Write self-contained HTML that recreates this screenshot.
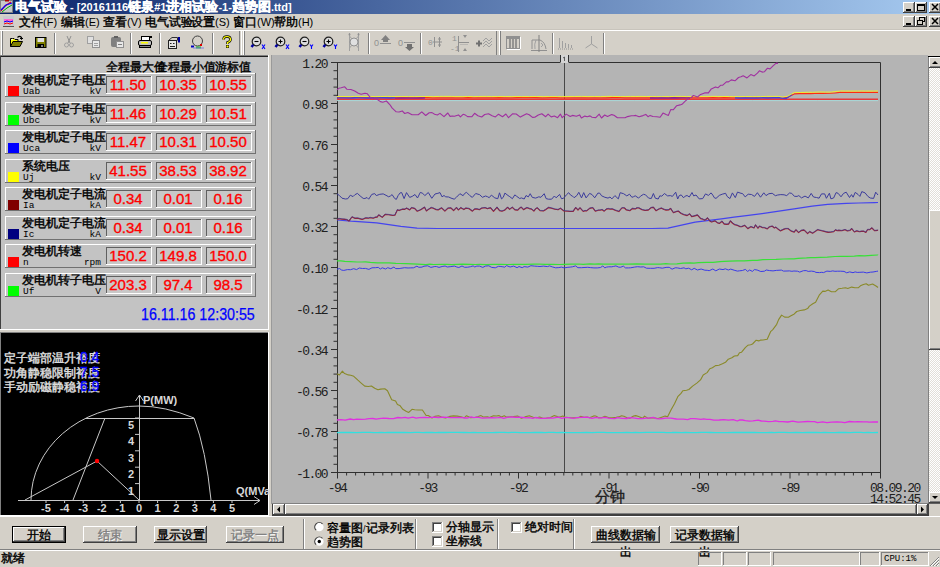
<!DOCTYPE html><html><head><meta charset="utf-8"><style>html,body{margin:0;padding:0;}body{width:940px;height:567px;position:relative;overflow:hidden;background:#d4d0c8;font-family:"Liberation Sans",sans-serif;font-size:12px;color:#000}div{box-sizing:border-box}svg{position:absolute;overflow:visible}.m{font-family:"Liberation Mono",monospace}</style></head><body><div style="position:absolute;left:0px;top:0px;width:940px;height:14px;background:linear-gradient(to right,#0a246a,#a6caf0)"></div><svg style="left:0;top:0" width="14" height="14"><rect x="0.5" y="0.5" width="12" height="12" fill="#c8c8c8" stroke="#808080"/><rect x="5" y="0" width="4" height="1.5" fill="#a00"/><polyline points="1,11 5,6 11,2" stroke="#f00" fill="none" stroke-width="1.2"/><polyline points="1,10 6,5 12,3" stroke="#00f" fill="none" stroke-width="1.2"/><polyline points="2,12 7,8 12,5" stroke="#0a0" fill="none" stroke-width="1"/></svg><div style="position:absolute;left:15px;top:0px;white-space:nowrap;color:#fff;font-weight:bold;line-height:14px"><span style="font-size:13px;-webkit-text-stroke:0.4px">电气试验</span><span style="font-size:11px;"> - [20161116</span><span style="font-size:13px;-webkit-text-stroke:0.4px">链泉</span><span style="font-size:11px;">#1</span><span style="font-size:13px;-webkit-text-stroke:0.4px">进相试验</span><span style="font-size:11px;">-1-</span><span style="font-size:13px;-webkit-text-stroke:0.4px">趋势图</span><span style="font-size:11px;">.ttd]</span></div><div style="position:absolute;left:903px;top:2px;width:12px;height:11px;background:#d4d0c8"></div><div style="position:absolute;left:903px;top:2px;width:12px;height:1px;background:#fff"></div><div style="position:absolute;left:903px;top:2px;width:1px;height:11px;background:#fff"></div><div style="position:absolute;left:903px;top:12px;width:12px;height:1px;background:#404040"></div><div style="position:absolute;left:914px;top:2px;width:1px;height:11px;background:#404040"></div><div style="position:absolute;left:904px;top:11px;width:10px;height:1px;background:#808080"></div><div style="position:absolute;left:913px;top:3px;width:1px;height:9px;background:#808080"></div><div style="position:absolute;left:903px;top:3px;width:12px;height:11px;line-height:11px;text-align:center;color:#000;font-size:12px;"></div><svg style="left:903px;top:2px" width="12" height="11"><rect x="3" y="7" width="5" height="2" fill="#000"/></svg><div style="position:absolute;left:915px;top:2px;width:12px;height:11px;background:#d4d0c8"></div><div style="position:absolute;left:915px;top:2px;width:12px;height:1px;background:#fff"></div><div style="position:absolute;left:915px;top:2px;width:1px;height:11px;background:#fff"></div><div style="position:absolute;left:915px;top:12px;width:12px;height:1px;background:#404040"></div><div style="position:absolute;left:926px;top:2px;width:1px;height:11px;background:#404040"></div><div style="position:absolute;left:916px;top:11px;width:10px;height:1px;background:#808080"></div><div style="position:absolute;left:925px;top:3px;width:1px;height:9px;background:#808080"></div><div style="position:absolute;left:915px;top:3px;width:12px;height:11px;line-height:11px;text-align:center;color:#000;font-size:12px;"></div><svg style="left:915px;top:2px" width="12" height="11"><rect x="2.5" y="2.5" width="7" height="6" fill="none" stroke="#000"/><rect x="2" y="2" width="8" height="2" fill="#000"/></svg><div style="position:absolute;left:929px;top:2px;width:12px;height:11px;background:#d4d0c8"></div><div style="position:absolute;left:929px;top:2px;width:12px;height:1px;background:#fff"></div><div style="position:absolute;left:929px;top:2px;width:1px;height:11px;background:#fff"></div><div style="position:absolute;left:929px;top:12px;width:12px;height:1px;background:#404040"></div><div style="position:absolute;left:940px;top:2px;width:1px;height:11px;background:#404040"></div><div style="position:absolute;left:930px;top:11px;width:10px;height:1px;background:#808080"></div><div style="position:absolute;left:939px;top:3px;width:1px;height:9px;background:#808080"></div><div style="position:absolute;left:929px;top:3px;width:12px;height:11px;line-height:11px;text-align:center;color:#000;font-size:12px;"></div><svg style="left:929px;top:2px" width="12" height="11"><path d="M3,2 L9,8 M9,2 L3,8" stroke="#000" stroke-width="1.5"/></svg><svg style="left:3px;top:16px" width="11" height="11"><rect x="0" y="0" width="11" height="11" fill="#c8c8d0"/><rect x="1" y="3" width="9" height="3" fill="#f6c"/><polyline points="1,6 4,5 7,6 10,5" stroke="#00f" fill="none"/><polyline points="1,8 4,7 7,8 10,7" stroke="#f00" fill="none"/><rect x="0" y="10" width="11" height="1" fill="#555"/></svg><div style="position:absolute;left:19px;top:15px;white-space:nowrap;line-height:14px"><span style="font-size:12px;-webkit-text-stroke:0.4px">文件</span><span style="font-size:11px;">(F)</span></div><div style="position:absolute;left:61px;top:15px;white-space:nowrap;line-height:14px"><span style="font-size:12px;-webkit-text-stroke:0.4px">编辑</span><span style="font-size:11px;">(E)</span></div><div style="position:absolute;left:103px;top:15px;white-space:nowrap;line-height:14px"><span style="font-size:12px;-webkit-text-stroke:0.4px">查看</span><span style="font-size:11px;">(V)</span></div><div style="position:absolute;left:145px;top:15px;white-space:nowrap;line-height:14px"><span style="font-size:12px;-webkit-text-stroke:0.4px">电气试验</span></div><div style="position:absolute;left:191px;top:15px;white-space:nowrap;line-height:14px"><span style="font-size:12px;-webkit-text-stroke:0.4px">设置</span><span style="font-size:11px;">(S)</span></div><div style="position:absolute;left:233px;top:15px;white-space:nowrap;line-height:14px"><span style="font-size:12px;-webkit-text-stroke:0.4px">窗口</span><span style="font-size:11px;">(W)</span></div><div style="position:absolute;left:274px;top:15px;white-space:nowrap;line-height:14px"><span style="font-size:12px;-webkit-text-stroke:0.4px">帮助</span><span style="font-size:11px;">(H)</span></div><div style="position:absolute;left:903px;top:16px;width:12px;height:11px;background:#d4d0c8"></div><div style="position:absolute;left:903px;top:16px;width:12px;height:1px;background:#fff"></div><div style="position:absolute;left:903px;top:16px;width:1px;height:11px;background:#fff"></div><div style="position:absolute;left:903px;top:26px;width:12px;height:1px;background:#404040"></div><div style="position:absolute;left:914px;top:16px;width:1px;height:11px;background:#404040"></div><div style="position:absolute;left:904px;top:25px;width:10px;height:1px;background:#808080"></div><div style="position:absolute;left:913px;top:17px;width:1px;height:9px;background:#808080"></div><div style="position:absolute;left:903px;top:17px;width:12px;height:11px;line-height:11px;text-align:center;color:#000;font-size:12px;"></div><svg style="left:903px;top:16px" width="12" height="11"><rect x="3" y="7" width="5" height="2" fill="#000"/></svg><div style="position:absolute;left:915px;top:16px;width:12px;height:11px;background:#d4d0c8"></div><div style="position:absolute;left:915px;top:16px;width:12px;height:1px;background:#fff"></div><div style="position:absolute;left:915px;top:16px;width:1px;height:11px;background:#fff"></div><div style="position:absolute;left:915px;top:26px;width:12px;height:1px;background:#404040"></div><div style="position:absolute;left:926px;top:16px;width:1px;height:11px;background:#404040"></div><div style="position:absolute;left:916px;top:25px;width:10px;height:1px;background:#808080"></div><div style="position:absolute;left:925px;top:17px;width:1px;height:9px;background:#808080"></div><div style="position:absolute;left:915px;top:17px;width:12px;height:11px;line-height:11px;text-align:center;color:#000;font-size:12px;"></div><svg style="left:915px;top:16px" width="12" height="11"><rect x="4.5" y="1.5" width="5" height="4" fill="none" stroke="#000"/><rect x="2.5" y="4.5" width="5" height="4" fill="#d4d0c8" stroke="#000"/></svg><div style="position:absolute;left:929px;top:16px;width:12px;height:11px;background:#d4d0c8"></div><div style="position:absolute;left:929px;top:16px;width:12px;height:1px;background:#fff"></div><div style="position:absolute;left:929px;top:16px;width:1px;height:11px;background:#fff"></div><div style="position:absolute;left:929px;top:26px;width:12px;height:1px;background:#404040"></div><div style="position:absolute;left:940px;top:16px;width:1px;height:11px;background:#404040"></div><div style="position:absolute;left:930px;top:25px;width:10px;height:1px;background:#808080"></div><div style="position:absolute;left:939px;top:17px;width:1px;height:9px;background:#808080"></div><div style="position:absolute;left:929px;top:17px;width:12px;height:11px;line-height:11px;text-align:center;color:#000;font-size:12px;"></div><svg style="left:929px;top:16px" width="12" height="11"><path d="M3,2 L9,8 M9,2 L3,8" stroke="#000" stroke-width="1.5"/></svg><div style="position:absolute;left:0px;top:29px;width:940px;height:1px;background:#c8c4bc"></div><div style="position:absolute;left:0px;top:30px;width:940px;height:1px;background:#fff"></div><div style="position:absolute;left:1px;top:31px;width:1px;height:24px;background:#fff"></div><div style="position:absolute;left:2px;top:31px;width:1px;height:24px;background:#808080"></div><div style="position:absolute;left:54px;top:33px;width:1px;height:21px;background:#808080"></div><div style="position:absolute;left:55px;top:33px;width:1px;height:21px;background:#fff"></div><div style="position:absolute;left:130px;top:33px;width:1px;height:21px;background:#808080"></div><div style="position:absolute;left:131px;top:33px;width:1px;height:21px;background:#fff"></div><div style="position:absolute;left:159px;top:33px;width:1px;height:21px;background:#808080"></div><div style="position:absolute;left:160px;top:33px;width:1px;height:21px;background:#fff"></div><div style="position:absolute;left:212px;top:33px;width:1px;height:21px;background:#808080"></div><div style="position:absolute;left:213px;top:33px;width:1px;height:21px;background:#fff"></div><div style="position:absolute;left:552px;top:33px;width:1px;height:21px;background:#808080"></div><div style="position:absolute;left:553px;top:33px;width:1px;height:21px;background:#fff"></div><div style="position:absolute;left:603px;top:33px;width:1px;height:21px;background:#808080"></div><div style="position:absolute;left:604px;top:33px;width:1px;height:21px;background:#fff"></div><div style="position:absolute;left:239px;top:31px;width:1px;height:24px;background:#808080"></div><div style="position:absolute;left:241px;top:31px;width:1px;height:24px;background:#fff"></div><div style="position:absolute;left:243px;top:31px;width:1px;height:24px;background:#fff"></div><div style="position:absolute;left:244px;top:31px;width:1px;height:24px;background:#808080"></div><div style="position:absolute;left:368px;top:33px;width:1px;height:21px;background:#808080"></div><div style="position:absolute;left:369px;top:33px;width:1px;height:21px;background:#fff"></div><div style="position:absolute;left:420px;top:33px;width:1px;height:21px;background:#808080"></div><div style="position:absolute;left:421px;top:33px;width:1px;height:21px;background:#fff"></div><div style="position:absolute;left:496px;top:31px;width:1px;height:24px;background:#808080"></div><div style="position:absolute;left:499px;top:31px;width:1px;height:24px;background:#fff"></div><div style="position:absolute;left:500px;top:31px;width:1px;height:24px;background:#808080"></div><svg style="left:10px;top:35px" width="14" height="13"><path d="M0.5,11.5 V3.5 H4 L5,4.5 H8 V6" fill="#ffff00" stroke="#000"/><path d="M1,5 L3,4" stroke="#fff"/><path d="M0.5,11.5 L3,6.5 H12.5 L10,11.5 Z" fill="#808000" stroke="#000"/><path d="M7.5,2.5 Q9.5,0.2 11.5,2.5 L11.5,4" fill="none" stroke="#000" stroke-width="1.2"/><path d="M10,3 L11.5,4.5 L13,3" fill="none" stroke="#000"/></svg><svg style="left:35px;top:37px" width="12" height="11"><rect x="0.5" y="0.5" width="10.5" height="10" fill="#808000" stroke="#000"/><rect x="2.5" y="1" width="6.5" height="4" fill="#e0e0e0"/><rect x="2.5" y="7" width="6.5" height="3.5" fill="#000"/><rect x="6.5" y="8" width="1" height="2" fill="#fff"/></svg><svg style="left:64px;top:36px" width="10" height="12"><path d="M3,0 L6,7 M7,0 L4,7" stroke="#909090"/><circle cx="2.5" cy="9" r="2" fill="none" stroke="#a0a0a0"/><circle cx="7.5" cy="9" r="2" fill="none" stroke="#a0a0a0"/></svg><svg style="left:87px;top:36px" width="13" height="12"><rect x="0.5" y="0.5" width="6" height="7" fill="#e0e0e0" stroke="#a0a0a0"/><rect x="5.5" y="4.5" width="7" height="7" fill="#e8e8e8" stroke="#909090"/><path d="M7,7.5 h4 M7,9.5 h4" stroke="#a0a0a0"/></svg><svg style="left:111px;top:36px" width="13" height="12"><rect x="0.5" y="1.5" width="9" height="9" rx="1" fill="#808080" stroke="#808080"/><rect x="3" y="0" width="4" height="2" fill="#606060"/><rect x="5.5" y="5.5" width="7" height="6" fill="#e8e8e8" stroke="#909090"/><path d="M7,8.5 h4" stroke="#808080"/></svg><svg style="left:138px;top:35px" width="15" height="14"><rect x="3.5" y="1.5" width="8" height="4" fill="#fff" stroke="#000"/><rect x="0.5" y="5.5" width="13" height="5" rx="1.5" fill="#c0c0c0" stroke="#000"/><rect x="3" y="7" width="7" height="1.5" fill="#ff0"/><rect x="1.5" y="10.5" width="11" height="2" fill="#808080" stroke="#000"/><rect x="12" y="1" width="2" height="2" fill="#000"/></svg><svg style="left:167px;top:36px" width="15" height="14"><rect x="1.5" y="4.5" width="8" height="8" fill="#e4e4e4" stroke="#202020"/><path d="M1.5,4.5 L5,1.5 H10.5 V4.5" fill="none" stroke="#303030"/><path d="M3,7.5 h1.5 M6,7.5 h1.5 M3,10.5 h5" stroke="#202020"/><rect x="11" y="1" width="2" height="5.5" fill="#0000a0"/></svg><svg style="left:191px;top:35px" width="14" height="14"><circle cx="6.5" cy="6" r="5" fill="none" stroke="#404040"/><rect x="0" y="10.5" width="3" height="2" fill="#0000c0"/><rect x="5" y="11.5" width="5" height="2" fill="#20c020"/><rect x="9" y="9" width="2" height="2" fill="#e00000"/><rect x="2" y="12.5" width="11" height="1" fill="#8080e0"/></svg><svg style="left:222px;top:36px" width="10" height="12"><path d="M1.5,3.5 Q1.5,0.5 5,0.5 Q8.5,0.5 8.5,3.5 Q8.5,5.5 5.5,6.5 V8" fill="none" stroke="#000" stroke-width="2.5"/><path d="M1.5,3.5 Q1.5,0.5 5,0.5 Q8.5,0.5 8.5,3.5 Q8.5,5.5 5.5,6.5 V8" fill="none" stroke="#ffff00" stroke-width="1.2"/><rect x="4" y="9" width="3" height="3" fill="#000"/><rect x="4.5" y="9.5" width="2" height="2" fill="#ff0"/></svg><svg style="left:251px;top:36px" width="16" height="14"><circle cx="5.5" cy="5.5" r="4.3" fill="#dcdcdc" stroke="#202020" stroke-width="1.2"/><path d="M3.5,5.5 H7.5" stroke="#000" stroke-width="1.1"/><path d="M2.3,8.7 L0.5,11" stroke="#0000a0" stroke-width="2.5"/><path d="M11,8.5 L14,13 M14,8.5 L11,13" stroke="#0000ff" stroke-width="1.1"/></svg><svg style="left:275px;top:36px" width="16" height="14"><circle cx="5.5" cy="5.5" r="4.3" fill="#dcdcdc" stroke="#202020" stroke-width="1.2"/><path d="M3.5,5.5 H7.5 M5.5,3.5 V7.5" stroke="#000" stroke-width="1.1"/><path d="M2.3,8.7 L0.5,11" stroke="#0000a0" stroke-width="2.5"/><path d="M11,8.5 L14,13 M14,8.5 L11,13" stroke="#0000ff" stroke-width="1.1"/></svg><svg style="left:299px;top:36px" width="16" height="14"><circle cx="5.5" cy="5.5" r="4.3" fill="#dcdcdc" stroke="#202020" stroke-width="1.2"/><path d="M3.5,5.5 H7.5" stroke="#000" stroke-width="1.1"/><path d="M2.3,8.7 L0.5,11" stroke="#0000a0" stroke-width="2.5"/><path d="M11,8.5 L12.5,10.5 L14,8.5 M12.5,10.5 V13" stroke="#0000ff" stroke-width="1.1" fill="none"/></svg><svg style="left:323px;top:36px" width="16" height="14"><circle cx="5.5" cy="5.5" r="4.3" fill="#dcdcdc" stroke="#202020" stroke-width="1.2"/><path d="M3.5,5.5 H7.5 M5.5,3.5 V7.5" stroke="#000" stroke-width="1.1"/><path d="M2.3,8.7 L0.5,11" stroke="#0000a0" stroke-width="2.5"/><path d="M11,8.5 L12.5,10.5 L14,8.5 M12.5,10.5 V13" stroke="#0000ff" stroke-width="1.1" fill="none"/></svg><svg style="left:348px;top:33px" width="12" height="19"><path d="M1.5,0 V18 M10.5,0 V18" stroke="#a0a0a0"/><circle cx="6" cy="9" r="4" fill="#e0e0e0" stroke="#909090"/><path d="M1.5,3 L4,6 M10.5,3 L8,6 M1.5,15 L4,12 M10.5,15 L8,12" stroke="#a0a0a0"/><circle cx="1.5" cy="1.5" r="1" fill="#909090"/><circle cx="10.5" cy="1.5" r="1" fill="#909090"/></svg><svg style="left:374px;top:34px" width="18" height="14"><text x="0" y="12" font-family="Liberation Sans" font-size="9" fill="#909090">0</text><path d="M7,6 L11.5,1 L16,6 Z" fill="#808080"/><rect x="9" y="6" width="5" height="2" fill="#808080"/><path d="M6,9.5 H17" stroke="#909090"/></svg><svg style="left:398px;top:37px" width="18" height="15"><text x="0" y="9" font-family="Liberation Sans" font-size="9" fill="#909090">0</text><path d="M6,5.5 H17" stroke="#909090"/><rect x="9" y="7" width="5" height="3" fill="#707070"/><path d="M7,10 L11.5,14 L16,10 Z" fill="#707070"/></svg><svg style="left:428px;top:36px" width="15" height="12"><text x="0" y="9" font-family="Liberation Mono" font-size="8" fill="#909090">0</text><path d="M6.5,1 V11 M11.5,1 V11 M5,6 H14 M10,3 H13 M10,9 H13" stroke="#909090"/></svg><svg style="left:450px;top:34px" width="20" height="18"><text x="2" y="7" font-family="Liberation Mono" font-size="8" fill="#909090">1</text><text x="0" y="17" font-family="Liberation Mono" font-size="8" fill="#909090">-1</text><path d="M8.5,2 V18 M8,8.5 H19" stroke="#909090"/><path d="M11,11 v-1 M13,11 v-1 M15,11 v-1 M17,11 v-1" stroke="#a0a0a0"/><path d="M13,1 L15,4 L17,1 Z M13,17 L15,14 L17,17 Z" fill="#909090"/></svg><svg style="left:475px;top:37px" width="18" height="12"><path d="M1,6.5 H7 M4,3.5 V9.5" stroke="#707070" stroke-width="2"/><path d="M8,4 L11,1 L14,4 L17,1 M8,7 L11,4 L14,7 L17,4 M8,10 L11,7 L14,10 L17,7" stroke="#a0a0a0" fill="none"/></svg><svg style="left:506px;top:36px" width="15" height="14"><rect x="0.5" y="0.5" width="13" height="12" fill="#d4d0c8" stroke="#909090"/><rect x="1" y="1" width="12" height="2" fill="#909090"/><path d="M4,3 V12 M7,3 V12 M10,3 V12" stroke="#808080" stroke-width="1.5"/><path d="M1,13.5 H14 M14.5,1 V13" stroke="#fff"/></svg><svg style="left:530px;top:35px" width="18" height="17"><path d="M1,15.5 H17" stroke="#909090"/><path d="M2,14 V5 H10 Q15,7 16,14" fill="none" stroke="#909090"/><path d="M9,0 V17" stroke="#808080"/><path d="M6,5 Q4,9 5,14 M11,8 L13,10 L11,12" stroke="#a0a0a0" fill="none"/></svg><svg style="left:558px;top:37px" width="17" height="13"><path d="M1.5,1 V11 M4.5,4 V11 M7.5,6 V11 M10.5,7 V11 M13.5,8 V11" stroke="#a0a0a0"/><path d="M0,12 H16" stroke="#909090" stroke-dasharray="1,1"/></svg><svg style="left:585px;top:36px" width="13" height="13"><path d="M6.5,0 V8 L0.5,12 M6.5,8 L12.5,12" stroke="#a0a0a0" fill="none"/></svg><div style="position:absolute;left:271px;top:55px;width:657px;height:449px;background:#b4b4b4"></div><div style="position:absolute;left:271px;top:55px;width:1px;height:449px;background:#9a9a9a"></div><div style="position:absolute;left:0px;top:55px;width:269px;height:275px;background:#c3c3c3"></div><div style="position:absolute;left:0px;top:55px;width:268px;height:1px;background:#808080"></div><div style="position:absolute;left:0px;top:56px;width:268px;height:1px;background:#202020"></div><div style="position:absolute;left:0px;top:56px;width:1px;height:273px;background:#404040"></div><div style="position:absolute;left:268px;top:55px;width:1px;height:275px;background:#fff"></div><div style="position:absolute;left:0px;top:329px;width:269px;height:1px;background:#fff"></div><div style="position:absolute;left:106px;top:60px;white-space:nowrap;line-height:14px"><span style="font-size:12px;-webkit-text-stroke:0.4px">全程最大值</span></div><div style="position:absolute;left:156px;top:60px;white-space:nowrap;line-height:14px"><span style="font-size:12px;-webkit-text-stroke:0.4px">全程最小值</span></div><div style="position:absolute;left:215px;top:60px;white-space:nowrap;line-height:14px"><span style="font-size:12px;-webkit-text-stroke:0.4px">游标值</span></div><div style="position:absolute;left:5px;top:73px;width:251px;height:24px;background:#c3c3c3"></div><div style="position:absolute;left:5px;top:73px;width:250px;height:1px;background:#fff"></div><div style="position:absolute;left:5px;top:73px;width:1px;height:23px;background:#fff"></div><div style="position:absolute;left:5px;top:96px;width:251px;height:1px;background:#707070"></div><div style="position:absolute;left:255px;top:73px;width:1px;height:24px;background:#707070"></div><div style="position:absolute;left:8px;top:86px;width:11px;height:10px;background:#ff0000"></div><div style="position:absolute;left:22px;top:73px;white-space:nowrap;line-height:14px"><span style="font-size:12px;-webkit-text-stroke:0.4px">发电机定子电压</span><span style="font-size:9px;">Uab</span></div><div style="position:absolute;left:23px;top:86px;white-space:nowrap;line-height:12px;font-size:9.5px;font-family:'Liberation Mono'">Uab</div><div style="position:absolute;left:60px;top:86px;width:41px;text-align:right;line-height:12px;font-size:9.5px;font-family:'Liberation Mono'">kV</div><div style="position:absolute;left:106px;top:76px;width:46px;height:18px;background:#c8c8c8"></div><div style="position:absolute;left:106px;top:76px;width:46px;height:1px;background:#606060"></div><div style="position:absolute;left:106px;top:76px;width:1px;height:18px;background:#606060"></div><div style="position:absolute;left:106px;top:93px;width:46px;height:1px;background:#ffffff"></div><div style="position:absolute;left:151px;top:76px;width:1px;height:18px;background:#ffffff"></div><div style="position:absolute;left:105px;top:76px;width:46px;height:18px;line-height:17px;text-align:center;color:#ff0000;font-size:15px;-webkit-text-stroke:0.35px #ff0000">11.50</div><div style="position:absolute;left:156px;top:76px;width:46px;height:18px;background:#c8c8c8"></div><div style="position:absolute;left:156px;top:76px;width:46px;height:1px;background:#606060"></div><div style="position:absolute;left:156px;top:76px;width:1px;height:18px;background:#606060"></div><div style="position:absolute;left:156px;top:93px;width:46px;height:1px;background:#ffffff"></div><div style="position:absolute;left:201px;top:76px;width:1px;height:18px;background:#ffffff"></div><div style="position:absolute;left:155px;top:76px;width:46px;height:18px;line-height:17px;text-align:center;color:#ff0000;font-size:15px;-webkit-text-stroke:0.35px #ff0000">10.35</div><div style="position:absolute;left:206px;top:76px;width:46px;height:18px;background:#c8c8c8"></div><div style="position:absolute;left:206px;top:76px;width:46px;height:1px;background:#606060"></div><div style="position:absolute;left:206px;top:76px;width:1px;height:18px;background:#606060"></div><div style="position:absolute;left:206px;top:93px;width:46px;height:1px;background:#ffffff"></div><div style="position:absolute;left:251px;top:76px;width:1px;height:18px;background:#ffffff"></div><div style="position:absolute;left:205px;top:76px;width:46px;height:18px;line-height:17px;text-align:center;color:#ff0000;font-size:15px;-webkit-text-stroke:0.35px #ff0000">10.55</div><div style="position:absolute;left:5px;top:102px;width:251px;height:24px;background:#c3c3c3"></div><div style="position:absolute;left:5px;top:102px;width:250px;height:1px;background:#fff"></div><div style="position:absolute;left:5px;top:102px;width:1px;height:23px;background:#fff"></div><div style="position:absolute;left:5px;top:125px;width:251px;height:1px;background:#707070"></div><div style="position:absolute;left:255px;top:102px;width:1px;height:24px;background:#707070"></div><div style="position:absolute;left:8px;top:115px;width:11px;height:10px;background:#00ff00"></div><div style="position:absolute;left:22px;top:102px;white-space:nowrap;line-height:14px"><span style="font-size:12px;-webkit-text-stroke:0.4px">发电机定子电压</span><span style="font-size:9px;">Ubc</span></div><div style="position:absolute;left:23px;top:115px;white-space:nowrap;line-height:12px;font-size:9.5px;font-family:'Liberation Mono'">Ubc</div><div style="position:absolute;left:60px;top:115px;width:41px;text-align:right;line-height:12px;font-size:9.5px;font-family:'Liberation Mono'">kV</div><div style="position:absolute;left:106px;top:105px;width:46px;height:18px;background:#c8c8c8"></div><div style="position:absolute;left:106px;top:105px;width:46px;height:1px;background:#606060"></div><div style="position:absolute;left:106px;top:105px;width:1px;height:18px;background:#606060"></div><div style="position:absolute;left:106px;top:122px;width:46px;height:1px;background:#ffffff"></div><div style="position:absolute;left:151px;top:105px;width:1px;height:18px;background:#ffffff"></div><div style="position:absolute;left:105px;top:105px;width:46px;height:18px;line-height:17px;text-align:center;color:#ff0000;font-size:15px;-webkit-text-stroke:0.35px #ff0000">11.46</div><div style="position:absolute;left:156px;top:105px;width:46px;height:18px;background:#c8c8c8"></div><div style="position:absolute;left:156px;top:105px;width:46px;height:1px;background:#606060"></div><div style="position:absolute;left:156px;top:105px;width:1px;height:18px;background:#606060"></div><div style="position:absolute;left:156px;top:122px;width:46px;height:1px;background:#ffffff"></div><div style="position:absolute;left:201px;top:105px;width:1px;height:18px;background:#ffffff"></div><div style="position:absolute;left:155px;top:105px;width:46px;height:18px;line-height:17px;text-align:center;color:#ff0000;font-size:15px;-webkit-text-stroke:0.35px #ff0000">10.29</div><div style="position:absolute;left:206px;top:105px;width:46px;height:18px;background:#c8c8c8"></div><div style="position:absolute;left:206px;top:105px;width:46px;height:1px;background:#606060"></div><div style="position:absolute;left:206px;top:105px;width:1px;height:18px;background:#606060"></div><div style="position:absolute;left:206px;top:122px;width:46px;height:1px;background:#ffffff"></div><div style="position:absolute;left:251px;top:105px;width:1px;height:18px;background:#ffffff"></div><div style="position:absolute;left:205px;top:105px;width:46px;height:18px;line-height:17px;text-align:center;color:#ff0000;font-size:15px;-webkit-text-stroke:0.35px #ff0000">10.51</div><div style="position:absolute;left:5px;top:130px;width:251px;height:24px;background:#c3c3c3"></div><div style="position:absolute;left:5px;top:130px;width:250px;height:1px;background:#fff"></div><div style="position:absolute;left:5px;top:130px;width:1px;height:23px;background:#fff"></div><div style="position:absolute;left:5px;top:153px;width:251px;height:1px;background:#707070"></div><div style="position:absolute;left:255px;top:130px;width:1px;height:24px;background:#707070"></div><div style="position:absolute;left:8px;top:143px;width:11px;height:10px;background:#0000ff"></div><div style="position:absolute;left:22px;top:130px;white-space:nowrap;line-height:14px"><span style="font-size:12px;-webkit-text-stroke:0.4px">发电机定子电压</span><span style="font-size:9px;">Uca</span></div><div style="position:absolute;left:23px;top:143px;white-space:nowrap;line-height:12px;font-size:9.5px;font-family:'Liberation Mono'">Uca</div><div style="position:absolute;left:60px;top:143px;width:41px;text-align:right;line-height:12px;font-size:9.5px;font-family:'Liberation Mono'">kV</div><div style="position:absolute;left:106px;top:133px;width:46px;height:18px;background:#c8c8c8"></div><div style="position:absolute;left:106px;top:133px;width:46px;height:1px;background:#606060"></div><div style="position:absolute;left:106px;top:133px;width:1px;height:18px;background:#606060"></div><div style="position:absolute;left:106px;top:150px;width:46px;height:1px;background:#ffffff"></div><div style="position:absolute;left:151px;top:133px;width:1px;height:18px;background:#ffffff"></div><div style="position:absolute;left:105px;top:133px;width:46px;height:18px;line-height:17px;text-align:center;color:#ff0000;font-size:15px;-webkit-text-stroke:0.35px #ff0000">11.47</div><div style="position:absolute;left:156px;top:133px;width:46px;height:18px;background:#c8c8c8"></div><div style="position:absolute;left:156px;top:133px;width:46px;height:1px;background:#606060"></div><div style="position:absolute;left:156px;top:133px;width:1px;height:18px;background:#606060"></div><div style="position:absolute;left:156px;top:150px;width:46px;height:1px;background:#ffffff"></div><div style="position:absolute;left:201px;top:133px;width:1px;height:18px;background:#ffffff"></div><div style="position:absolute;left:155px;top:133px;width:46px;height:18px;line-height:17px;text-align:center;color:#ff0000;font-size:15px;-webkit-text-stroke:0.35px #ff0000">10.31</div><div style="position:absolute;left:206px;top:133px;width:46px;height:18px;background:#c8c8c8"></div><div style="position:absolute;left:206px;top:133px;width:46px;height:1px;background:#606060"></div><div style="position:absolute;left:206px;top:133px;width:1px;height:18px;background:#606060"></div><div style="position:absolute;left:206px;top:150px;width:46px;height:1px;background:#ffffff"></div><div style="position:absolute;left:251px;top:133px;width:1px;height:18px;background:#ffffff"></div><div style="position:absolute;left:205px;top:133px;width:46px;height:18px;line-height:17px;text-align:center;color:#ff0000;font-size:15px;-webkit-text-stroke:0.35px #ff0000">10.50</div><div style="position:absolute;left:5px;top:159px;width:251px;height:24px;background:#c3c3c3"></div><div style="position:absolute;left:5px;top:159px;width:250px;height:1px;background:#fff"></div><div style="position:absolute;left:5px;top:159px;width:1px;height:23px;background:#fff"></div><div style="position:absolute;left:5px;top:182px;width:251px;height:1px;background:#707070"></div><div style="position:absolute;left:255px;top:159px;width:1px;height:24px;background:#707070"></div><div style="position:absolute;left:8px;top:172px;width:11px;height:10px;background:#ffff00"></div><div style="position:absolute;left:22px;top:159px;white-space:nowrap;line-height:14px"><span style="font-size:12px;-webkit-text-stroke:0.4px">系统电压</span></div><div style="position:absolute;left:23px;top:172px;white-space:nowrap;line-height:12px;font-size:9.5px;font-family:'Liberation Mono'">Uj</div><div style="position:absolute;left:60px;top:172px;width:41px;text-align:right;line-height:12px;font-size:9.5px;font-family:'Liberation Mono'">kV</div><div style="position:absolute;left:106px;top:162px;width:46px;height:18px;background:#c8c8c8"></div><div style="position:absolute;left:106px;top:162px;width:46px;height:1px;background:#606060"></div><div style="position:absolute;left:106px;top:162px;width:1px;height:18px;background:#606060"></div><div style="position:absolute;left:106px;top:179px;width:46px;height:1px;background:#ffffff"></div><div style="position:absolute;left:151px;top:162px;width:1px;height:18px;background:#ffffff"></div><div style="position:absolute;left:105px;top:162px;width:46px;height:18px;line-height:17px;text-align:center;color:#ff0000;font-size:15px;-webkit-text-stroke:0.35px #ff0000">41.55</div><div style="position:absolute;left:156px;top:162px;width:46px;height:18px;background:#c8c8c8"></div><div style="position:absolute;left:156px;top:162px;width:46px;height:1px;background:#606060"></div><div style="position:absolute;left:156px;top:162px;width:1px;height:18px;background:#606060"></div><div style="position:absolute;left:156px;top:179px;width:46px;height:1px;background:#ffffff"></div><div style="position:absolute;left:201px;top:162px;width:1px;height:18px;background:#ffffff"></div><div style="position:absolute;left:155px;top:162px;width:46px;height:18px;line-height:17px;text-align:center;color:#ff0000;font-size:15px;-webkit-text-stroke:0.35px #ff0000">38.53</div><div style="position:absolute;left:206px;top:162px;width:46px;height:18px;background:#c8c8c8"></div><div style="position:absolute;left:206px;top:162px;width:46px;height:1px;background:#606060"></div><div style="position:absolute;left:206px;top:162px;width:1px;height:18px;background:#606060"></div><div style="position:absolute;left:206px;top:179px;width:46px;height:1px;background:#ffffff"></div><div style="position:absolute;left:251px;top:162px;width:1px;height:18px;background:#ffffff"></div><div style="position:absolute;left:205px;top:162px;width:46px;height:18px;line-height:17px;text-align:center;color:#ff0000;font-size:15px;-webkit-text-stroke:0.35px #ff0000">38.92</div><div style="position:absolute;left:5px;top:187px;width:251px;height:24px;background:#c3c3c3"></div><div style="position:absolute;left:5px;top:187px;width:250px;height:1px;background:#fff"></div><div style="position:absolute;left:5px;top:187px;width:1px;height:23px;background:#fff"></div><div style="position:absolute;left:5px;top:210px;width:251px;height:1px;background:#707070"></div><div style="position:absolute;left:255px;top:187px;width:1px;height:24px;background:#707070"></div><div style="position:absolute;left:8px;top:200px;width:11px;height:10px;background:#800000"></div><div style="position:absolute;left:22px;top:187px;white-space:nowrap;line-height:14px"><span style="font-size:12px;-webkit-text-stroke:0.4px">发电机定子电流</span><span style="font-size:9px;">Ia</span></div><div style="position:absolute;left:23px;top:200px;white-space:nowrap;line-height:12px;font-size:9.5px;font-family:'Liberation Mono'">Ia</div><div style="position:absolute;left:60px;top:200px;width:41px;text-align:right;line-height:12px;font-size:9.5px;font-family:'Liberation Mono'">kA</div><div style="position:absolute;left:106px;top:190px;width:46px;height:18px;background:#c8c8c8"></div><div style="position:absolute;left:106px;top:190px;width:46px;height:1px;background:#606060"></div><div style="position:absolute;left:106px;top:190px;width:1px;height:18px;background:#606060"></div><div style="position:absolute;left:106px;top:207px;width:46px;height:1px;background:#ffffff"></div><div style="position:absolute;left:151px;top:190px;width:1px;height:18px;background:#ffffff"></div><div style="position:absolute;left:105px;top:190px;width:46px;height:18px;line-height:17px;text-align:center;color:#ff0000;font-size:15px;-webkit-text-stroke:0.35px #ff0000">0.34</div><div style="position:absolute;left:156px;top:190px;width:46px;height:18px;background:#c8c8c8"></div><div style="position:absolute;left:156px;top:190px;width:46px;height:1px;background:#606060"></div><div style="position:absolute;left:156px;top:190px;width:1px;height:18px;background:#606060"></div><div style="position:absolute;left:156px;top:207px;width:46px;height:1px;background:#ffffff"></div><div style="position:absolute;left:201px;top:190px;width:1px;height:18px;background:#ffffff"></div><div style="position:absolute;left:155px;top:190px;width:46px;height:18px;line-height:17px;text-align:center;color:#ff0000;font-size:15px;-webkit-text-stroke:0.35px #ff0000">0.01</div><div style="position:absolute;left:206px;top:190px;width:46px;height:18px;background:#c8c8c8"></div><div style="position:absolute;left:206px;top:190px;width:46px;height:1px;background:#606060"></div><div style="position:absolute;left:206px;top:190px;width:1px;height:18px;background:#606060"></div><div style="position:absolute;left:206px;top:207px;width:46px;height:1px;background:#ffffff"></div><div style="position:absolute;left:251px;top:190px;width:1px;height:18px;background:#ffffff"></div><div style="position:absolute;left:205px;top:190px;width:46px;height:18px;line-height:17px;text-align:center;color:#ff0000;font-size:15px;-webkit-text-stroke:0.35px #ff0000">0.16</div><div style="position:absolute;left:5px;top:216px;width:251px;height:24px;background:#c3c3c3"></div><div style="position:absolute;left:5px;top:216px;width:250px;height:1px;background:#fff"></div><div style="position:absolute;left:5px;top:216px;width:1px;height:23px;background:#fff"></div><div style="position:absolute;left:5px;top:239px;width:251px;height:1px;background:#707070"></div><div style="position:absolute;left:255px;top:216px;width:1px;height:24px;background:#707070"></div><div style="position:absolute;left:8px;top:229px;width:11px;height:10px;background:#000080"></div><div style="position:absolute;left:22px;top:216px;white-space:nowrap;line-height:14px"><span style="font-size:12px;-webkit-text-stroke:0.4px">发电机定子电流</span><span style="font-size:9px;">Ic</span></div><div style="position:absolute;left:23px;top:229px;white-space:nowrap;line-height:12px;font-size:9.5px;font-family:'Liberation Mono'">Ic</div><div style="position:absolute;left:60px;top:229px;width:41px;text-align:right;line-height:12px;font-size:9.5px;font-family:'Liberation Mono'">kA</div><div style="position:absolute;left:106px;top:219px;width:46px;height:18px;background:#c8c8c8"></div><div style="position:absolute;left:106px;top:219px;width:46px;height:1px;background:#606060"></div><div style="position:absolute;left:106px;top:219px;width:1px;height:18px;background:#606060"></div><div style="position:absolute;left:106px;top:236px;width:46px;height:1px;background:#ffffff"></div><div style="position:absolute;left:151px;top:219px;width:1px;height:18px;background:#ffffff"></div><div style="position:absolute;left:105px;top:219px;width:46px;height:18px;line-height:17px;text-align:center;color:#ff0000;font-size:15px;-webkit-text-stroke:0.35px #ff0000">0.34</div><div style="position:absolute;left:156px;top:219px;width:46px;height:18px;background:#c8c8c8"></div><div style="position:absolute;left:156px;top:219px;width:46px;height:1px;background:#606060"></div><div style="position:absolute;left:156px;top:219px;width:1px;height:18px;background:#606060"></div><div style="position:absolute;left:156px;top:236px;width:46px;height:1px;background:#ffffff"></div><div style="position:absolute;left:201px;top:219px;width:1px;height:18px;background:#ffffff"></div><div style="position:absolute;left:155px;top:219px;width:46px;height:18px;line-height:17px;text-align:center;color:#ff0000;font-size:15px;-webkit-text-stroke:0.35px #ff0000">0.01</div><div style="position:absolute;left:206px;top:219px;width:46px;height:18px;background:#c8c8c8"></div><div style="position:absolute;left:206px;top:219px;width:46px;height:1px;background:#606060"></div><div style="position:absolute;left:206px;top:219px;width:1px;height:18px;background:#606060"></div><div style="position:absolute;left:206px;top:236px;width:46px;height:1px;background:#ffffff"></div><div style="position:absolute;left:251px;top:219px;width:1px;height:18px;background:#ffffff"></div><div style="position:absolute;left:205px;top:219px;width:46px;height:18px;line-height:17px;text-align:center;color:#ff0000;font-size:15px;-webkit-text-stroke:0.35px #ff0000">0.16</div><div style="position:absolute;left:5px;top:244px;width:251px;height:24px;background:#c3c3c3"></div><div style="position:absolute;left:5px;top:244px;width:250px;height:1px;background:#fff"></div><div style="position:absolute;left:5px;top:244px;width:1px;height:23px;background:#fff"></div><div style="position:absolute;left:5px;top:267px;width:251px;height:1px;background:#707070"></div><div style="position:absolute;left:255px;top:244px;width:1px;height:24px;background:#707070"></div><div style="position:absolute;left:8px;top:257px;width:11px;height:10px;background:#ff0000"></div><div style="position:absolute;left:22px;top:244px;white-space:nowrap;line-height:14px"><span style="font-size:12px;-webkit-text-stroke:0.4px">发电机转速</span></div><div style="position:absolute;left:23px;top:257px;white-space:nowrap;line-height:12px;font-size:9.5px;font-family:'Liberation Mono'">n</div><div style="position:absolute;left:60px;top:257px;width:41px;text-align:right;line-height:12px;font-size:9.5px;font-family:'Liberation Mono'">rpm</div><div style="position:absolute;left:106px;top:247px;width:46px;height:18px;background:#c8c8c8"></div><div style="position:absolute;left:106px;top:247px;width:46px;height:1px;background:#606060"></div><div style="position:absolute;left:106px;top:247px;width:1px;height:18px;background:#606060"></div><div style="position:absolute;left:106px;top:264px;width:46px;height:1px;background:#ffffff"></div><div style="position:absolute;left:151px;top:247px;width:1px;height:18px;background:#ffffff"></div><div style="position:absolute;left:105px;top:247px;width:46px;height:18px;line-height:17px;text-align:center;color:#ff0000;font-size:15px;-webkit-text-stroke:0.35px #ff0000">150.2</div><div style="position:absolute;left:156px;top:247px;width:46px;height:18px;background:#c8c8c8"></div><div style="position:absolute;left:156px;top:247px;width:46px;height:1px;background:#606060"></div><div style="position:absolute;left:156px;top:247px;width:1px;height:18px;background:#606060"></div><div style="position:absolute;left:156px;top:264px;width:46px;height:1px;background:#ffffff"></div><div style="position:absolute;left:201px;top:247px;width:1px;height:18px;background:#ffffff"></div><div style="position:absolute;left:155px;top:247px;width:46px;height:18px;line-height:17px;text-align:center;color:#ff0000;font-size:15px;-webkit-text-stroke:0.35px #ff0000">149.8</div><div style="position:absolute;left:206px;top:247px;width:46px;height:18px;background:#c8c8c8"></div><div style="position:absolute;left:206px;top:247px;width:46px;height:1px;background:#606060"></div><div style="position:absolute;left:206px;top:247px;width:1px;height:18px;background:#606060"></div><div style="position:absolute;left:206px;top:264px;width:46px;height:1px;background:#ffffff"></div><div style="position:absolute;left:251px;top:247px;width:1px;height:18px;background:#ffffff"></div><div style="position:absolute;left:205px;top:247px;width:46px;height:18px;line-height:17px;text-align:center;color:#ff0000;font-size:15px;-webkit-text-stroke:0.35px #ff0000">150.0</div><div style="position:absolute;left:5px;top:273px;width:251px;height:24px;background:#c3c3c3"></div><div style="position:absolute;left:5px;top:273px;width:250px;height:1px;background:#fff"></div><div style="position:absolute;left:5px;top:273px;width:1px;height:23px;background:#fff"></div><div style="position:absolute;left:5px;top:296px;width:251px;height:1px;background:#707070"></div><div style="position:absolute;left:255px;top:273px;width:1px;height:24px;background:#707070"></div><div style="position:absolute;left:8px;top:286px;width:11px;height:10px;background:#00ff00"></div><div style="position:absolute;left:22px;top:273px;white-space:nowrap;line-height:14px"><span style="font-size:12px;-webkit-text-stroke:0.4px">发电机转子电压</span><span style="font-size:9px;">(10</span></div><div style="position:absolute;left:23px;top:286px;white-space:nowrap;line-height:12px;font-size:9.5px;font-family:'Liberation Mono'">Uf</div><div style="position:absolute;left:60px;top:286px;width:41px;text-align:right;line-height:12px;font-size:9.5px;font-family:'Liberation Mono'">V</div><div style="position:absolute;left:106px;top:276px;width:46px;height:18px;background:#c8c8c8"></div><div style="position:absolute;left:106px;top:276px;width:46px;height:1px;background:#606060"></div><div style="position:absolute;left:106px;top:276px;width:1px;height:18px;background:#606060"></div><div style="position:absolute;left:106px;top:293px;width:46px;height:1px;background:#ffffff"></div><div style="position:absolute;left:151px;top:276px;width:1px;height:18px;background:#ffffff"></div><div style="position:absolute;left:105px;top:276px;width:46px;height:18px;line-height:17px;text-align:center;color:#ff0000;font-size:15px;-webkit-text-stroke:0.35px #ff0000">203.3</div><div style="position:absolute;left:156px;top:276px;width:46px;height:18px;background:#c8c8c8"></div><div style="position:absolute;left:156px;top:276px;width:46px;height:1px;background:#606060"></div><div style="position:absolute;left:156px;top:276px;width:1px;height:18px;background:#606060"></div><div style="position:absolute;left:156px;top:293px;width:46px;height:1px;background:#ffffff"></div><div style="position:absolute;left:201px;top:276px;width:1px;height:18px;background:#ffffff"></div><div style="position:absolute;left:155px;top:276px;width:46px;height:18px;line-height:17px;text-align:center;color:#ff0000;font-size:15px;-webkit-text-stroke:0.35px #ff0000">97.4</div><div style="position:absolute;left:206px;top:276px;width:46px;height:18px;background:#c8c8c8"></div><div style="position:absolute;left:206px;top:276px;width:46px;height:1px;background:#606060"></div><div style="position:absolute;left:206px;top:276px;width:1px;height:18px;background:#606060"></div><div style="position:absolute;left:206px;top:293px;width:46px;height:1px;background:#ffffff"></div><div style="position:absolute;left:251px;top:276px;width:1px;height:18px;background:#ffffff"></div><div style="position:absolute;left:205px;top:276px;width:46px;height:18px;line-height:17px;text-align:center;color:#ff0000;font-size:15px;-webkit-text-stroke:0.35px #ff0000">98.5</div><div style="position:absolute;left:141px;top:304px;white-space:nowrap;color:#0000ff;font-size:16px;line-height:22px;transform:scaleX(0.89);transform-origin:0 0;-webkit-text-stroke:0.25px #0000ff">16.11.16 12:30:55</div><div style="position:absolute;left:0px;top:332px;width:269px;height:184px;background:#000"></div><div style="position:absolute;left:0px;top:332px;width:268px;height:1px;background:#808080"></div><div style="position:absolute;left:0px;top:332px;width:1px;height:183px;background:#808080"></div><div style="position:absolute;left:268px;top:332px;width:1px;height:184px;background:#fff"></div><div style="position:absolute;left:0px;top:515px;width:269px;height:1px;background:#fff"></div><div style="position:absolute;left:4px;top:351.0px;white-space:nowrap;color:#e0e0e0;line-height:14px"><span style="font-size:12px;-webkit-text-stroke:0.4px">定子端部温升裕度</span></div><div style="position:absolute;left:80px;top:348.0px;white-space:nowrap;color:#0000ff;font-size:14px;line-height:18px;-webkit-text-stroke:0.35px #0000ff">0.4</div><div style="position:absolute;left:4px;top:365.5px;white-space:nowrap;color:#e0e0e0;line-height:14px"><span style="font-size:12px;-webkit-text-stroke:0.4px">功角静稳限制裕度</span></div><div style="position:absolute;left:80px;top:362.5px;white-space:nowrap;color:#0000ff;font-size:14px;line-height:18px;-webkit-text-stroke:0.35px #0000ff">7.5</div><div style="position:absolute;left:4px;top:380.0px;white-space:nowrap;color:#e0e0e0;line-height:14px"><span style="font-size:12px;-webkit-text-stroke:0.4px">手动励磁静稳裕度</span></div><div style="position:absolute;left:80px;top:377.0px;white-space:nowrap;color:#0000ff;font-size:14px;line-height:18px;-webkit-text-stroke:0.35px #0000ff">6.9</div><svg style="left:0;top:332px" width="268" height="184" viewBox="0 332 268 184"><path d="M18,500.5 H260 M254,496.5 L260,500.5 L254,504.5" stroke="#c8c8c8" fill="none" stroke-width="1"/><path d="M139.5,500 V395 M135.5,401 L139.5,395 L143.5,401" stroke="#c8c8c8" fill="none" stroke-width="1"/><path d="M46.0,500 V503" stroke="#c8c8c8" fill="none" stroke-width="1"/><path d="M64.6,500 V503" stroke="#c8c8c8" fill="none" stroke-width="1"/><path d="M83.2,500 V503" stroke="#c8c8c8" fill="none" stroke-width="1"/><path d="M101.8,500 V503" stroke="#c8c8c8" fill="none" stroke-width="1"/><path d="M120.4,500 V503" stroke="#c8c8c8" fill="none" stroke-width="1"/><path d="M139.0,500 V503" stroke="#c8c8c8" fill="none" stroke-width="1"/><path d="M157.6,500 V503" stroke="#c8c8c8" fill="none" stroke-width="1"/><path d="M176.2,500 V503" stroke="#c8c8c8" fill="none" stroke-width="1"/><path d="M194.8,500 V503" stroke="#c8c8c8" fill="none" stroke-width="1"/><path d="M213.4,500 V503" stroke="#c8c8c8" fill="none" stroke-width="1"/><path d="M232.0,500 V503" stroke="#c8c8c8" fill="none" stroke-width="1"/><path d="M135,483.6 H139" stroke="#c8c8c8" fill="none" stroke-width="1"/><path d="M135,467.2 H139" stroke="#c8c8c8" fill="none" stroke-width="1"/><path d="M135,450.8 H139" stroke="#c8c8c8" fill="none" stroke-width="1"/><path d="M135,434.4 H139" stroke="#c8c8c8" fill="none" stroke-width="1"/><path d="M135,418.0 H139" stroke="#c8c8c8" fill="none" stroke-width="1"/><path d="M31,500 A108,94 0 0 1 139,406 Q165,406 194,418" stroke="#c8c8c8" fill="none" stroke-width="1"/><path d="M194,418 Q206,450 211,500" stroke="#c8c8c8" fill="none" stroke-width="1"/><path d="M85,418.5 H194" stroke="#c8c8c8" fill="none" stroke-width="1"/><path d="M73,500 L105,418" stroke="#c8c8c8" fill="none" stroke-width="1"/><path d="M25,500 L97,461 L139,500" stroke="#c8c8c8" fill="none" stroke-width="1"/><circle cx="97" cy="461" r="2.2" fill="#ff0000"/></svg><div style="position:absolute;left:143px;top:393px;white-space:nowrap;color:#d8d8d8;font-size:11px;line-height:14px;font-weight:bold">P(MW)</div><div style="position:absolute;left:236px;top:484px;white-space:nowrap;color:#d8d8d8;font-size:11px;line-height:14px;font-weight:bold">Q(MVa</div><div style="position:absolute;left:31.0px;top:502px;width:30px;text-align:center;color:#d8d8d8;font-size:11px;line-height:13px;font-weight:bold">-5</div><div style="position:absolute;left:49.6px;top:502px;width:30px;text-align:center;color:#d8d8d8;font-size:11px;line-height:13px;font-weight:bold">-4</div><div style="position:absolute;left:68.2px;top:502px;width:30px;text-align:center;color:#d8d8d8;font-size:11px;line-height:13px;font-weight:bold">-3</div><div style="position:absolute;left:86.8px;top:502px;width:30px;text-align:center;color:#d8d8d8;font-size:11px;line-height:13px;font-weight:bold">-2</div><div style="position:absolute;left:105.4px;top:502px;width:30px;text-align:center;color:#d8d8d8;font-size:11px;line-height:13px;font-weight:bold">-1</div><div style="position:absolute;left:124.0px;top:502px;width:30px;text-align:center;color:#d8d8d8;font-size:11px;line-height:13px;font-weight:bold">0</div><div style="position:absolute;left:142.6px;top:502px;width:30px;text-align:center;color:#d8d8d8;font-size:11px;line-height:13px;font-weight:bold">1</div><div style="position:absolute;left:161.2px;top:502px;width:30px;text-align:center;color:#d8d8d8;font-size:11px;line-height:13px;font-weight:bold">2</div><div style="position:absolute;left:179.8px;top:502px;width:30px;text-align:center;color:#d8d8d8;font-size:11px;line-height:13px;font-weight:bold">3</div><div style="position:absolute;left:198.4px;top:502px;width:30px;text-align:center;color:#d8d8d8;font-size:11px;line-height:13px;font-weight:bold">4</div><div style="position:absolute;left:217.0px;top:502px;width:30px;text-align:center;color:#d8d8d8;font-size:11px;line-height:13px;font-weight:bold">5</div><div style="position:absolute;left:128px;top:484.6px;white-space:nowrap;color:#d8d8d8;font-size:11px;line-height:13px;font-weight:bold">1</div><div style="position:absolute;left:128px;top:468.2px;white-space:nowrap;color:#d8d8d8;font-size:11px;line-height:13px;font-weight:bold">2</div><div style="position:absolute;left:128px;top:451.8px;white-space:nowrap;color:#d8d8d8;font-size:11px;line-height:13px;font-weight:bold">3</div><div style="position:absolute;left:128px;top:435.4px;white-space:nowrap;color:#d8d8d8;font-size:11px;line-height:13px;font-weight:bold">4</div><div style="position:absolute;left:128px;top:419.0px;white-space:nowrap;color:#d8d8d8;font-size:11px;line-height:13px;font-weight:bold">5</div><div style="position:absolute;left:928px;top:55px;width:12px;height:1px;background:#d4d0c8"></div><div style="position:absolute;left:928px;top:57px;width:12px;height:446px;background:repeating-conic-gradient(#fff 0 25%,#e2dfd8 0 50%) 0 0/2px 2px"></div><div style="position:absolute;left:928px;top:56px;width:1px;height:447px;background:#808080"></div><div style="position:absolute;left:928px;top:56px;width:12px;height:1px;background:#000"></div><div style="position:absolute;left:929px;top:57px;width:13px;height:11px;background:#d4d0c8"></div><div style="position:absolute;left:929px;top:57px;width:13px;height:1px;background:#fff"></div><div style="position:absolute;left:929px;top:57px;width:1px;height:11px;background:#fff"></div><div style="position:absolute;left:929px;top:67px;width:13px;height:1px;background:#404040"></div><div style="position:absolute;left:941px;top:57px;width:1px;height:11px;background:#404040"></div><div style="position:absolute;left:930px;top:66px;width:11px;height:1px;background:#808080"></div><div style="position:absolute;left:940px;top:58px;width:1px;height:9px;background:#808080"></div><div style="position:absolute;left:929px;top:58px;width:13px;height:11px;line-height:11px;text-align:center;color:#000;font-size:12px;"></div><svg style="left:929px;top:57px" width="12" height="11"><path d="M3,7 L6,4 L9,7 Z" fill="#000"/></svg><div style="position:absolute;left:929px;top:210px;width:13px;height:140px;background:#d4d0c8"></div><div style="position:absolute;left:929px;top:210px;width:13px;height:1px;background:#fff"></div><div style="position:absolute;left:929px;top:210px;width:1px;height:140px;background:#fff"></div><div style="position:absolute;left:929px;top:349px;width:13px;height:1px;background:#404040"></div><div style="position:absolute;left:941px;top:210px;width:1px;height:140px;background:#404040"></div><div style="position:absolute;left:930px;top:348px;width:11px;height:1px;background:#808080"></div><div style="position:absolute;left:940px;top:211px;width:1px;height:138px;background:#808080"></div><div style="position:absolute;left:929px;top:211px;width:13px;height:140px;line-height:140px;text-align:center;color:#000;font-size:12px;"></div><div style="position:absolute;left:929px;top:492px;width:13px;height:11px;background:#d4d0c8"></div><div style="position:absolute;left:929px;top:492px;width:13px;height:1px;background:#fff"></div><div style="position:absolute;left:929px;top:492px;width:1px;height:11px;background:#fff"></div><div style="position:absolute;left:929px;top:502px;width:13px;height:1px;background:#404040"></div><div style="position:absolute;left:941px;top:492px;width:1px;height:11px;background:#404040"></div><div style="position:absolute;left:930px;top:501px;width:11px;height:1px;background:#808080"></div><div style="position:absolute;left:940px;top:493px;width:1px;height:9px;background:#808080"></div><div style="position:absolute;left:929px;top:493px;width:13px;height:11px;line-height:11px;text-align:center;color:#000;font-size:12px;"></div><svg style="left:929px;top:492px" width="12" height="11"><path d="M3,4 L6,7 L9,4 Z" fill="#000"/></svg><div style="position:absolute;left:928px;top:503px;width:12px;height:1px;background:#606060"></div><div style="position:absolute;left:272px;top:504px;width:657px;height:12px;background:#d4d0c8"></div><div style="position:absolute;left:272px;top:504px;width:1px;height:12px;background:#404040"></div><div style="position:absolute;left:272px;top:503px;width:656px;height:1px;background:#808080"></div><div style="position:absolute;left:272px;top:515px;width:657px;height:1px;background:#404040"></div><div style="position:absolute;left:928px;top:504px;width:1px;height:12px;background:#404040"></div><div style="position:absolute;left:273px;top:504px;width:12px;height:11px;background:#d4d0c8"></div><div style="position:absolute;left:273px;top:504px;width:12px;height:1px;background:#fff"></div><div style="position:absolute;left:273px;top:504px;width:1px;height:11px;background:#fff"></div><div style="position:absolute;left:273px;top:514px;width:12px;height:1px;background:#404040"></div><div style="position:absolute;left:284px;top:504px;width:1px;height:11px;background:#404040"></div><div style="position:absolute;left:274px;top:513px;width:10px;height:1px;background:#808080"></div><div style="position:absolute;left:283px;top:505px;width:1px;height:9px;background:#808080"></div><div style="position:absolute;left:273px;top:505px;width:12px;height:11px;line-height:11px;text-align:center;color:#000;font-size:12px;"></div><svg style="left:273px;top:504px" width="12" height="11"><path d="M7,2.5 L4,5.5 L7,8.5 Z" fill="#000"/></svg><div style="position:absolute;left:285px;top:504px;width:632px;height:11px;background:#d4d0c8"></div><div style="position:absolute;left:285px;top:504px;width:632px;height:1px;background:#fff"></div><div style="position:absolute;left:285px;top:504px;width:1px;height:11px;background:#fff"></div><div style="position:absolute;left:285px;top:514px;width:632px;height:1px;background:#404040"></div><div style="position:absolute;left:916px;top:504px;width:1px;height:11px;background:#404040"></div><div style="position:absolute;left:286px;top:513px;width:630px;height:1px;background:#808080"></div><div style="position:absolute;left:915px;top:505px;width:1px;height:9px;background:#808080"></div><div style="position:absolute;left:285px;top:505px;width:632px;height:11px;line-height:11px;text-align:center;color:#000;font-size:12px;"></div><div style="position:absolute;left:917px;top:504px;width:11px;height:11px;background:#d4d0c8"></div><div style="position:absolute;left:917px;top:504px;width:11px;height:1px;background:#fff"></div><div style="position:absolute;left:917px;top:504px;width:1px;height:11px;background:#fff"></div><div style="position:absolute;left:917px;top:514px;width:11px;height:1px;background:#404040"></div><div style="position:absolute;left:927px;top:504px;width:1px;height:11px;background:#404040"></div><div style="position:absolute;left:918px;top:513px;width:9px;height:1px;background:#808080"></div><div style="position:absolute;left:926px;top:505px;width:1px;height:9px;background:#808080"></div><div style="position:absolute;left:917px;top:505px;width:11px;height:11px;line-height:11px;text-align:center;color:#000;font-size:12px;"></div><svg style="left:917px;top:504px" width="11" height="11"><path d="M4,2.5 L7,5.5 L4,8.5 Z" fill="#000"/></svg><div style="position:absolute;left:929px;top:504px;width:11px;height:12px;background:#d4d0c8"></div><div style="position:absolute;left:0px;top:516px;width:940px;height:1px;background:#fff"></div><div style="position:absolute;left:12px;top:526px;width:54px;height:17px;background:#d4d0c8"></div><div style="position:absolute;left:12px;top:526px;width:54px;height:1px;background:#000"></div><div style="position:absolute;left:12px;top:526px;width:1px;height:17px;background:#000"></div><div style="position:absolute;left:12px;top:542px;width:54px;height:1px;background:#000"></div><div style="position:absolute;left:65px;top:526px;width:1px;height:17px;background:#000"></div><div style="position:absolute;left:13px;top:527px;width:52px;height:1px;background:#fff"></div><div style="position:absolute;left:13px;top:527px;width:1px;height:15px;background:#fff"></div><div style="position:absolute;left:13px;top:541px;width:52px;height:1px;background:#404040"></div><div style="position:absolute;left:64px;top:527px;width:1px;height:15px;background:#404040"></div><div style="position:absolute;left:14px;top:540px;width:50px;height:1px;background:#808080"></div><div style="position:absolute;left:63px;top:528px;width:1px;height:13px;background:#808080"></div><div style="position:absolute;left:12px;top:527px;width:54px;height:17px;line-height:17px;text-align:center;color:#000;font-size:12px;"><span style="font-size:12px;-webkit-text-stroke:0.4px">开始</span></div><div style="position:absolute;left:83px;top:526px;width:54px;height:17px;background:#d4d0c8"></div><div style="position:absolute;left:83px;top:526px;width:54px;height:1px;background:#fff"></div><div style="position:absolute;left:83px;top:526px;width:1px;height:17px;background:#fff"></div><div style="position:absolute;left:83px;top:542px;width:54px;height:1px;background:#404040"></div><div style="position:absolute;left:136px;top:526px;width:1px;height:17px;background:#404040"></div><div style="position:absolute;left:84px;top:541px;width:52px;height:1px;background:#808080"></div><div style="position:absolute;left:135px;top:527px;width:1px;height:15px;background:#808080"></div><div style="position:absolute;left:83px;top:527px;width:54px;height:17px;line-height:17px;text-align:center;color:#808080;text-shadow:1px 1px 0 #fff;font-size:12px;"><span style="font-size:12px;-webkit-text-stroke:0.4px">结束</span></div><div style="position:absolute;left:154px;top:526px;width:53px;height:17px;background:#d4d0c8"></div><div style="position:absolute;left:154px;top:526px;width:53px;height:1px;background:#fff"></div><div style="position:absolute;left:154px;top:526px;width:1px;height:17px;background:#fff"></div><div style="position:absolute;left:154px;top:542px;width:53px;height:1px;background:#404040"></div><div style="position:absolute;left:206px;top:526px;width:1px;height:17px;background:#404040"></div><div style="position:absolute;left:155px;top:541px;width:51px;height:1px;background:#808080"></div><div style="position:absolute;left:205px;top:527px;width:1px;height:15px;background:#808080"></div><div style="position:absolute;left:154px;top:527px;width:53px;height:17px;line-height:17px;text-align:center;color:#000;font-size:12px;"><span style="font-size:12px;-webkit-text-stroke:0.4px">显示设置</span></div><div style="position:absolute;left:226px;top:526px;width:58px;height:17px;background:#d4d0c8"></div><div style="position:absolute;left:226px;top:526px;width:58px;height:1px;background:#fff"></div><div style="position:absolute;left:226px;top:526px;width:1px;height:17px;background:#fff"></div><div style="position:absolute;left:226px;top:542px;width:58px;height:1px;background:#404040"></div><div style="position:absolute;left:283px;top:526px;width:1px;height:17px;background:#404040"></div><div style="position:absolute;left:227px;top:541px;width:56px;height:1px;background:#808080"></div><div style="position:absolute;left:282px;top:527px;width:1px;height:15px;background:#808080"></div><div style="position:absolute;left:226px;top:527px;width:58px;height:17px;line-height:17px;text-align:center;color:#808080;text-shadow:1px 1px 0 #fff;font-size:12px;"><span style="font-size:12px;-webkit-text-stroke:0.4px">记录一点</span></div><div style="position:absolute;left:591px;top:526px;width:69px;height:17px;background:#d4d0c8"></div><div style="position:absolute;left:591px;top:526px;width:69px;height:1px;background:#fff"></div><div style="position:absolute;left:591px;top:526px;width:1px;height:17px;background:#fff"></div><div style="position:absolute;left:591px;top:542px;width:69px;height:1px;background:#404040"></div><div style="position:absolute;left:659px;top:526px;width:1px;height:17px;background:#404040"></div><div style="position:absolute;left:592px;top:541px;width:67px;height:1px;background:#808080"></div><div style="position:absolute;left:658px;top:527px;width:1px;height:15px;background:#808080"></div><div style="position:absolute;left:591px;top:527px;width:69px;height:17px;line-height:17px;text-align:center;color:#000;font-size:12px;"><span style="font-size:12px;-webkit-text-stroke:0.4px">曲线数据输出</span></div><div style="position:absolute;left:670px;top:526px;width:69px;height:17px;background:#d4d0c8"></div><div style="position:absolute;left:670px;top:526px;width:69px;height:1px;background:#fff"></div><div style="position:absolute;left:670px;top:526px;width:1px;height:17px;background:#fff"></div><div style="position:absolute;left:670px;top:542px;width:69px;height:1px;background:#404040"></div><div style="position:absolute;left:738px;top:526px;width:1px;height:17px;background:#404040"></div><div style="position:absolute;left:671px;top:541px;width:67px;height:1px;background:#808080"></div><div style="position:absolute;left:737px;top:527px;width:1px;height:15px;background:#808080"></div><div style="position:absolute;left:670px;top:527px;width:69px;height:17px;line-height:17px;text-align:center;color:#000;font-size:12px;"><span style="font-size:12px;-webkit-text-stroke:0.4px">记录数据输出</span></div><div style="position:absolute;left:303px;top:519px;width:1px;height:30px;background:#808080"></div><div style="position:absolute;left:304px;top:519px;width:1px;height:30px;background:#fff"></div><div style="position:absolute;left:415px;top:519px;width:1px;height:30px;background:#808080"></div><div style="position:absolute;left:416px;top:519px;width:1px;height:30px;background:#fff"></div><div style="position:absolute;left:497px;top:519px;width:1px;height:30px;background:#808080"></div><div style="position:absolute;left:498px;top:519px;width:1px;height:30px;background:#fff"></div><div style="position:absolute;left:573px;top:519px;width:1px;height:30px;background:#808080"></div><div style="position:absolute;left:574px;top:519px;width:1px;height:30px;background:#fff"></div><svg style="left:312px;top:520px" width="16" height="28"><g transform="translate(7.3,7)"><circle r="4.3" fill="#fff"/><path d="M-3.2,3.2 A4.5,4.5 0 0 1 3.2,-3.2" stroke="#404040" stroke-width="1.2" fill="none"/></g><g transform="translate(7.3,21.5)"><circle r="4.3" fill="#fff"/><path d="M-3.2,3.2 A4.5,4.5 0 0 1 3.2,-3.2" stroke="#404040" stroke-width="1.2" fill="none"/><circle r="1.7" fill="#000"/></g></svg><div style="position:absolute;left:327px;top:521px;white-space:nowrap;line-height:14px"><span style="font-size:12px;-webkit-text-stroke:0.4px">容量图</span><span style="font-size:9px;">/</span><span style="font-size:12px;-webkit-text-stroke:0.4px">记录列表</span></div><div style="position:absolute;left:327px;top:535px;white-space:nowrap;line-height:14px"><span style="font-size:12px;-webkit-text-stroke:0.4px">趋势图</span></div><div style="position:absolute;left:432px;top:522px;width:11px;height:11px;background:#fff"></div><div style="position:absolute;left:432px;top:522px;width:11px;height:1px;background:#808080"></div><div style="position:absolute;left:432px;top:522px;width:1px;height:11px;background:#808080"></div><div style="position:absolute;left:432px;top:532px;width:11px;height:1px;background:#fff"></div><div style="position:absolute;left:442px;top:522px;width:1px;height:11px;background:#fff"></div><div style="position:absolute;left:433px;top:523px;width:9px;height:1px;background:#404040"></div><div style="position:absolute;left:433px;top:523px;width:1px;height:9px;background:#404040"></div><div style="position:absolute;left:433px;top:531px;width:9px;height:1px;background:#d4d0c8"></div><div style="position:absolute;left:441px;top:523px;width:1px;height:9px;background:#d4d0c8"></div><div style="position:absolute;left:432px;top:536px;width:11px;height:11px;background:#fff"></div><div style="position:absolute;left:432px;top:536px;width:11px;height:1px;background:#808080"></div><div style="position:absolute;left:432px;top:536px;width:1px;height:11px;background:#808080"></div><div style="position:absolute;left:432px;top:546px;width:11px;height:1px;background:#fff"></div><div style="position:absolute;left:442px;top:536px;width:1px;height:11px;background:#fff"></div><div style="position:absolute;left:433px;top:537px;width:9px;height:1px;background:#404040"></div><div style="position:absolute;left:433px;top:537px;width:1px;height:9px;background:#404040"></div><div style="position:absolute;left:433px;top:545px;width:9px;height:1px;background:#d4d0c8"></div><div style="position:absolute;left:441px;top:537px;width:1px;height:9px;background:#d4d0c8"></div><div style="position:absolute;left:511px;top:522px;width:11px;height:11px;background:#fff"></div><div style="position:absolute;left:511px;top:522px;width:11px;height:1px;background:#808080"></div><div style="position:absolute;left:511px;top:522px;width:1px;height:11px;background:#808080"></div><div style="position:absolute;left:511px;top:532px;width:11px;height:1px;background:#fff"></div><div style="position:absolute;left:521px;top:522px;width:1px;height:11px;background:#fff"></div><div style="position:absolute;left:512px;top:523px;width:9px;height:1px;background:#404040"></div><div style="position:absolute;left:512px;top:523px;width:1px;height:9px;background:#404040"></div><div style="position:absolute;left:512px;top:531px;width:9px;height:1px;background:#d4d0c8"></div><div style="position:absolute;left:520px;top:523px;width:1px;height:9px;background:#d4d0c8"></div><div style="position:absolute;left:446px;top:520px;white-space:nowrap;line-height:14px"><span style="font-size:12px;-webkit-text-stroke:0.4px">分轴显示</span></div><div style="position:absolute;left:446px;top:534px;white-space:nowrap;line-height:14px"><span style="font-size:12px;-webkit-text-stroke:0.4px">坐标线</span></div><div style="position:absolute;left:525px;top:520px;white-space:nowrap;line-height:14px"><span style="font-size:12px;-webkit-text-stroke:0.4px">绝对时间</span></div><div style="position:absolute;left:0px;top:549px;width:940px;height:1px;background:#808080"></div><div style="position:absolute;left:0px;top:550px;width:940px;height:1px;background:#fff"></div><div style="position:absolute;left:1px;top:551px;white-space:nowrap;line-height:14px"><span style="font-size:12px;-webkit-text-stroke:0.4px">就绪</span></div><div style="position:absolute;left:698px;top:552px;width:24px;height:1px;background:#808080"></div><div style="position:absolute;left:698px;top:552px;width:1px;height:14px;background:#808080"></div><div style="position:absolute;left:698px;top:565px;width:24px;height:1px;background:#fff"></div><div style="position:absolute;left:721px;top:552px;width:1px;height:14px;background:#fff"></div><div style="position:absolute;left:723px;top:552px;width:24px;height:1px;background:#808080"></div><div style="position:absolute;left:723px;top:552px;width:1px;height:14px;background:#808080"></div><div style="position:absolute;left:723px;top:565px;width:24px;height:1px;background:#fff"></div><div style="position:absolute;left:746px;top:552px;width:1px;height:14px;background:#fff"></div><div style="position:absolute;left:748px;top:552px;width:23px;height:1px;background:#808080"></div><div style="position:absolute;left:748px;top:552px;width:1px;height:14px;background:#808080"></div><div style="position:absolute;left:748px;top:565px;width:23px;height:1px;background:#fff"></div><div style="position:absolute;left:770px;top:552px;width:1px;height:14px;background:#fff"></div><div style="position:absolute;left:773px;top:552px;width:87px;height:1px;background:#808080"></div><div style="position:absolute;left:773px;top:552px;width:1px;height:14px;background:#808080"></div><div style="position:absolute;left:773px;top:565px;width:87px;height:1px;background:#fff"></div><div style="position:absolute;left:859px;top:552px;width:1px;height:14px;background:#fff"></div><div style="position:absolute;left:860px;top:552px;width:20px;height:1px;background:#808080"></div><div style="position:absolute;left:860px;top:552px;width:1px;height:14px;background:#808080"></div><div style="position:absolute;left:860px;top:565px;width:20px;height:1px;background:#fff"></div><div style="position:absolute;left:879px;top:552px;width:1px;height:14px;background:#fff"></div><div style="position:absolute;left:881px;top:552px;width:48px;height:1px;background:#808080"></div><div style="position:absolute;left:881px;top:552px;width:1px;height:14px;background:#808080"></div><div style="position:absolute;left:881px;top:565px;width:48px;height:1px;background:#fff"></div><div style="position:absolute;left:928px;top:552px;width:1px;height:14px;background:#fff"></div><div style="position:absolute;left:884px;top:552px;white-space:nowrap;font-family:'Liberation Mono';font-size:9px;line-height:14px">CPU:1%</div><svg style="left:928px;top:555px" width="12" height="12"><path d="M11,2 L2,11 M11,5 L5,11 M11,8 L8,11" stroke="#808080"/><path d="M11,3 L3,11 M11,6 L6,11 M11,9 L9,11" stroke="#fff"/></svg><svg style="left:0;top:0" width="940" height="567"><path d="M331,62.5 H880.5 V478 M337.5,62 V472.5 H880.5" fill="none" stroke="#303030" stroke-width="1"/><path d="M331,62.5 H337" stroke="#303030" stroke-width="1"/><path d="M333.5,70.7 H337" stroke="#303030" stroke-width="1"/><path d="M333.5,78.9 H337" stroke="#303030" stroke-width="1"/><path d="M333.5,87.1 H337" stroke="#303030" stroke-width="1"/><path d="M333.5,95.3 H337" stroke="#303030" stroke-width="1"/><path d="M331,103.5 H337" stroke="#303030" stroke-width="1"/><path d="M333.5,111.7 H337" stroke="#303030" stroke-width="1"/><path d="M333.5,119.9 H337" stroke="#303030" stroke-width="1"/><path d="M333.5,128.1 H337" stroke="#303030" stroke-width="1"/><path d="M333.5,136.3 H337" stroke="#303030" stroke-width="1"/><path d="M331,144.5 H337" stroke="#303030" stroke-width="1"/><path d="M333.5,152.7 H337" stroke="#303030" stroke-width="1"/><path d="M333.5,160.9 H337" stroke="#303030" stroke-width="1"/><path d="M333.5,169.1 H337" stroke="#303030" stroke-width="1"/><path d="M333.5,177.3 H337" stroke="#303030" stroke-width="1"/><path d="M331,185.5 H337" stroke="#303030" stroke-width="1"/><path d="M333.5,193.7 H337" stroke="#303030" stroke-width="1"/><path d="M333.5,201.9 H337" stroke="#303030" stroke-width="1"/><path d="M333.5,210.1 H337" stroke="#303030" stroke-width="1"/><path d="M333.5,218.3 H337" stroke="#303030" stroke-width="1"/><path d="M331,226.5 H337" stroke="#303030" stroke-width="1"/><path d="M333.5,234.7 H337" stroke="#303030" stroke-width="1"/><path d="M333.5,242.9 H337" stroke="#303030" stroke-width="1"/><path d="M333.5,251.1 H337" stroke="#303030" stroke-width="1"/><path d="M333.5,259.3 H337" stroke="#303030" stroke-width="1"/><path d="M331,267.5 H337" stroke="#303030" stroke-width="1"/><path d="M333.5,275.7 H337" stroke="#303030" stroke-width="1"/><path d="M333.5,283.9 H337" stroke="#303030" stroke-width="1"/><path d="M333.5,292.1 H337" stroke="#303030" stroke-width="1"/><path d="M333.5,300.3 H337" stroke="#303030" stroke-width="1"/><path d="M331,308.5 H337" stroke="#303030" stroke-width="1"/><path d="M333.5,316.7 H337" stroke="#303030" stroke-width="1"/><path d="M333.5,324.9 H337" stroke="#303030" stroke-width="1"/><path d="M333.5,333.1 H337" stroke="#303030" stroke-width="1"/><path d="M333.5,341.3 H337" stroke="#303030" stroke-width="1"/><path d="M331,349.5 H337" stroke="#303030" stroke-width="1"/><path d="M333.5,357.7 H337" stroke="#303030" stroke-width="1"/><path d="M333.5,365.9 H337" stroke="#303030" stroke-width="1"/><path d="M333.5,374.1 H337" stroke="#303030" stroke-width="1"/><path d="M333.5,382.3 H337" stroke="#303030" stroke-width="1"/><path d="M331,390.5 H337" stroke="#303030" stroke-width="1"/><path d="M333.5,398.7 H337" stroke="#303030" stroke-width="1"/><path d="M333.5,406.9 H337" stroke="#303030" stroke-width="1"/><path d="M333.5,415.1 H337" stroke="#303030" stroke-width="1"/><path d="M333.5,423.3 H337" stroke="#303030" stroke-width="1"/><path d="M331,431.5 H337" stroke="#303030" stroke-width="1"/><path d="M333.5,439.7 H337" stroke="#303030" stroke-width="1"/><path d="M333.5,447.9 H337" stroke="#303030" stroke-width="1"/><path d="M333.5,456.1 H337" stroke="#303030" stroke-width="1"/><path d="M333.5,464.3 H337" stroke="#303030" stroke-width="1"/><path d="M331,472.5 H337" stroke="#303030" stroke-width="1"/><path d="M337.5,472 V478.5" stroke="#303030" stroke-width="1"/><path d="M346.6,472 V475.5" stroke="#303030" stroke-width="1"/><path d="M355.6,472 V475.5" stroke="#303030" stroke-width="1"/><path d="M364.6,472 V475.5" stroke="#303030" stroke-width="1"/><path d="M373.7,472 V475.5" stroke="#303030" stroke-width="1"/><path d="M382.8,472 V475.5" stroke="#303030" stroke-width="1"/><path d="M391.8,472 V475.5" stroke="#303030" stroke-width="1"/><path d="M400.9,472 V475.5" stroke="#303030" stroke-width="1"/><path d="M409.9,472 V475.5" stroke="#303030" stroke-width="1"/><path d="M418.9,472 V475.5" stroke="#303030" stroke-width="1"/><path d="M428.0,472 V478.5" stroke="#303030" stroke-width="1"/><path d="M437.1,472 V475.5" stroke="#303030" stroke-width="1"/><path d="M446.1,472 V475.5" stroke="#303030" stroke-width="1"/><path d="M455.1,472 V475.5" stroke="#303030" stroke-width="1"/><path d="M464.2,472 V475.5" stroke="#303030" stroke-width="1"/><path d="M473.2,472 V475.5" stroke="#303030" stroke-width="1"/><path d="M482.3,472 V475.5" stroke="#303030" stroke-width="1"/><path d="M491.4,472 V475.5" stroke="#303030" stroke-width="1"/><path d="M500.4,472 V475.5" stroke="#303030" stroke-width="1"/><path d="M509.4,472 V475.5" stroke="#303030" stroke-width="1"/><path d="M518.5,472 V478.5" stroke="#303030" stroke-width="1"/><path d="M527.5,472 V475.5" stroke="#303030" stroke-width="1"/><path d="M536.6,472 V475.5" stroke="#303030" stroke-width="1"/><path d="M545.6,472 V475.5" stroke="#303030" stroke-width="1"/><path d="M554.7,472 V475.5" stroke="#303030" stroke-width="1"/><path d="M563.8,472 V475.5" stroke="#303030" stroke-width="1"/><path d="M572.8,472 V475.5" stroke="#303030" stroke-width="1"/><path d="M581.9,472 V475.5" stroke="#303030" stroke-width="1"/><path d="M590.9,472 V475.5" stroke="#303030" stroke-width="1"/><path d="M600.0,472 V475.5" stroke="#303030" stroke-width="1"/><path d="M609.0,472 V478.5" stroke="#303030" stroke-width="1"/><path d="M618.0,472 V475.5" stroke="#303030" stroke-width="1"/><path d="M627.1,472 V475.5" stroke="#303030" stroke-width="1"/><path d="M636.1,472 V475.5" stroke="#303030" stroke-width="1"/><path d="M645.2,472 V475.5" stroke="#303030" stroke-width="1"/><path d="M654.2,472 V475.5" stroke="#303030" stroke-width="1"/><path d="M663.3,472 V475.5" stroke="#303030" stroke-width="1"/><path d="M672.4,472 V475.5" stroke="#303030" stroke-width="1"/><path d="M681.4,472 V475.5" stroke="#303030" stroke-width="1"/><path d="M690.5,472 V475.5" stroke="#303030" stroke-width="1"/><path d="M699.5,472 V478.5" stroke="#303030" stroke-width="1"/><path d="M708.5,472 V475.5" stroke="#303030" stroke-width="1"/><path d="M717.6,472 V475.5" stroke="#303030" stroke-width="1"/><path d="M726.6,472 V475.5" stroke="#303030" stroke-width="1"/><path d="M735.7,472 V475.5" stroke="#303030" stroke-width="1"/><path d="M744.8,472 V475.5" stroke="#303030" stroke-width="1"/><path d="M753.8,472 V475.5" stroke="#303030" stroke-width="1"/><path d="M762.9,472 V475.5" stroke="#303030" stroke-width="1"/><path d="M771.9,472 V475.5" stroke="#303030" stroke-width="1"/><path d="M781.0,472 V475.5" stroke="#303030" stroke-width="1"/><path d="M790.0,472 V478.5" stroke="#303030" stroke-width="1"/><path d="M799.0,472 V475.5" stroke="#303030" stroke-width="1"/><path d="M808.1,472 V475.5" stroke="#303030" stroke-width="1"/><path d="M817.1,472 V475.5" stroke="#303030" stroke-width="1"/><path d="M826.2,472 V475.5" stroke="#303030" stroke-width="1"/><path d="M835.2,472 V475.5" stroke="#303030" stroke-width="1"/><path d="M844.3,472 V475.5" stroke="#303030" stroke-width="1"/><path d="M853.4,472 V475.5" stroke="#303030" stroke-width="1"/><path d="M862.4,472 V475.5" stroke="#303030" stroke-width="1"/><path d="M871.5,472 V475.5" stroke="#303030" stroke-width="1"/><path d="M880.5,472 V478.5" stroke="#303030" stroke-width="1"/><path d="M564.5,63 V472" stroke="#484848" stroke-width="1"/><polyline points="337.0,220.0 351.1,221.2 376.7,222.8 400.9,226.3 417.0,228.2 436.9,228.5 456.1,228.5 478.6,228.5 503.2,228.5 516.7,228.5 529.1,228.5 554.5,228.5 573.4,228.5 597.6,228.5 609.7,228.5 628.8,228.5 652.3,228.5 668.0,228.2 695.1,222.2 721.5,218.8 734.0,217.2 746.4,215.7 767.1,212.9 794.1,208.9 812.2,206.2 827.7,204.4 846.4,203.3 858.9,203.0 874.5,202.6 878.0,202.5" fill="none" stroke="#4444ee" stroke-width="1.2" stroke-linejoin="round"/><polyline points="337.0,193.8 339.4,195.5 342.0,198.2 345.4,199.0 347.8,198.7 350.3,195.2 353.0,196.6 354.9,194.7 357.4,193.4 360.1,195.9 363.2,198.4 364.9,198.5 367.0,197.5 368.7,199.2 371.8,194.4 374.7,193.6 376.3,195.6 379.8,194.3 383.2,193.9 386.0,195.3 388.7,196.8 390.5,195.9 392.1,194.6 394.6,198.4 396.3,199.4 398.1,195.6 400.1,192.9 401.7,192.6 404.1,198.6 406.5,192.6 409.7,197.4 412.2,196.4 415.0,194.5 417.5,198.0 420.3,192.4 422.7,193.3 424.8,195.6 428.3,192.5 431.8,198.3 435.0,194.0 437.9,193.3 440.0,192.6 442.0,196.8 444.0,195.5 445.7,196.8 448.7,197.0 451.0,198.1 454.2,199.2 456.5,197.2 459.9,193.7 463.1,195.7 464.6,193.5 466.5,192.3 469.8,195.6 472.3,197.4 475.7,193.5 478.0,194.2 479.7,194.7 482.4,197.3 485.5,196.0 487.5,196.7 489.2,197.7 491.4,195.1 494.8,197.9 497.8,198.7 499.5,192.8 501.5,198.9 503.2,197.4 504.9,193.1 508.0,195.5 509.8,196.7 512.4,198.7 514.8,194.9 516.7,196.3 519.7,198.5 521.4,197.9 524.2,199.0 526.0,195.5 528.3,196.9 530.2,193.7 532.3,197.4 535.7,198.1 538.8,196.8 540.9,197.3 544.2,193.7 546.1,198.6 548.4,199.2 551.6,199.2 554.4,196.0 556.1,197.8 559.6,194.4 561.5,198.7 563.5,198.3 566.6,194.6 568.7,192.7 570.8,195.3 572.5,196.1 574.1,197.7 576.8,195.6 578.8,192.3 581.5,197.9 583.7,192.6 586.1,197.9 589.6,193.4 592.0,194.5 594.7,197.8 597.9,193.1 599.8,193.2 601.6,195.8 604.9,197.3 608.0,198.1 610.0,197.0 611.9,198.9 614.9,195.6 618.3,198.9 620.2,192.7 623.6,193.7 626.8,195.9 629.5,194.2 631.9,197.3 633.6,196.7 635.2,195.8 638.6,198.1 640.6,196.1 643.5,194.3 645.5,194.8 648.6,198.1 651.3,198.5 653.4,193.5 655.3,198.2 658.2,199.0 659.8,195.8 661.8,196.2 664.4,193.5 667.6,195.9 670.4,195.6 672.4,196.4 675.7,192.2 677.7,199.0 679.2,195.7 681.2,194.9 683.6,197.8 685.2,196.1 687.1,195.5 689.3,197.0 692.0,192.5 693.7,195.9 696.0,195.0 699.2,198.9 702.7,198.6 705.5,193.9 708.4,195.4 711.1,192.9 712.8,195.1 714.4,197.8 716.0,198.4 719.3,195.4 722.2,194.2 725.6,193.3 727.1,196.4 729.9,198.6 732.4,192.9 735.3,197.6 737.5,192.1 741.0,193.3 742.6,193.6 745.2,196.9 748.2,194.2 751.5,194.5 754.5,196.4 757.4,192.7 760.5,197.2 763.8,192.8 766.0,195.6 768.9,193.7 772.2,193.3 775.4,195.7 777.7,195.0 780.8,194.6 784.1,194.8 786.7,195.6 789.5,193.0 791.7,193.3 794.4,196.3 797.1,196.4 798.8,195.6 801.5,197.9 805.0,196.1 808.3,197.9 811.2,193.4 813.5,197.0 816.5,197.5 819.1,198.2 821.5,193.9 824.7,193.9 826.4,198.3 829.4,193.2 830.9,198.8 833.6,198.0 836.1,192.6 838.1,193.3 841.0,196.8 843.5,193.4 846.2,192.2 849.5,197.5 851.5,194.6 853.1,197.2 855.2,192.4 858.0,194.4 859.9,196.4 861.8,191.6 865.1,192.9 867.9,196.4 870.3,198.0 873.6,198.4 875.7,192.2 878.0,195.0" fill="none" stroke="#3c3c9c" stroke-width="1.0" stroke-linejoin="round"/><polyline points="337.0,219.8 338.8,218.7 341.7,219.1 344.5,219.4 346.9,219.8 348.9,221.1 352.0,217.0 355.1,218.4 357.6,218.2 360.1,218.9 362.1,219.5 363.6,218.9 365.8,218.0 368.5,218.3 370.1,217.7 373.2,218.3 375.2,217.4 377.2,217.1 378.7,215.0 382.2,217.4 385.2,214.5 388.5,214.8 391.2,215.2 392.8,215.5 394.9,215.2 397.4,209.9 399.1,210.6 402.5,209.3 404.8,209.4 406.6,208.3 409.7,209.9 411.5,207.8 414.8,208.6 417.2,211.3 419.8,210.3 422.0,209.0 424.5,207.3 426.4,211.0 427.9,209.9 431.2,207.7 433.2,208.3 436.2,209.7 438.1,209.9 441.6,208.0 444.9,211.1 447.9,208.3 450.9,208.0 453.6,210.7 456.5,207.6 458.3,210.0 460.7,207.8 463.9,209.6 465.8,208.2 469.1,208.7 472.4,211.2 474.7,209.1 476.9,209.0 479.3,209.8 481.6,208.3 485.1,207.8 487.4,208.8 488.9,208.3 490.6,207.9 493.5,211.3 497.0,207.3 499.5,210.7 502.0,211.3 504.6,210.3 507.6,207.3 509.6,209.4 512.3,207.4 514.9,209.9 517.6,210.3 519.5,208.3 521.3,207.3 523.5,209.7 526.9,207.7 529.1,208.6 531.8,209.3 533.9,211.2 535.6,208.9 537.2,207.9 540.3,210.8 543.4,211.0 545.6,209.7 548.5,207.6 551.4,208.2 554.7,209.2 558.1,209.8 560.4,208.4 563.9,211.0 567.3,211.2 570.0,211.5 573.2,211.4 575.7,207.6 578.0,210.1 580.0,207.9 583.2,211.5 585.0,210.8 586.7,210.9 589.8,208.4 592.8,207.8 595.3,211.2 598.5,210.3 600.1,210.3 602.1,209.7 604.2,211.2 606.5,209.1 608.4,208.8 610.0,209.2 612.2,209.0 615.5,210.4 618.9,211.6 621.9,208.0 624.4,208.0 626.4,210.0 629.8,210.7 632.4,208.6 635.3,209.0 636.9,208.0 638.8,208.0 642.0,209.8 645.1,210.5 648.3,210.1 651.0,207.8 653.4,207.4 656.1,210.8 659.3,208.9 661.4,208.2 663.9,209.5 666.0,210.1 669.0,209.9 670.5,208.4 673.4,212.8 676.8,211.5 678.4,211.3 681.1,213.5 683.8,214.7 687.1,215.6 689.7,214.0 691.7,216.7 694.0,216.1 697.5,215.1 700.8,218.8 702.5,219.1 704.2,220.1 705.9,219.6 707.5,218.0 709.9,221.2 711.6,222.0 714.9,220.9 717.7,223.0 719.4,223.5 722.0,221.3 724.2,224.1 726.7,224.4 728.6,224.1 730.4,221.0 732.3,223.0 734.6,224.7 737.5,225.5 740.1,226.8 741.7,226.8 744.6,225.4 747.8,228.7 750.9,226.8 754.0,228.1 755.5,225.0 757.9,228.3 759.5,226.3 762.6,227.7 764.4,227.8 767.3,228.9 769.3,227.0 772.2,226.3 774.4,228.0 775.9,227.3 778.2,229.3 780.3,230.9 783.6,229.4 785.7,228.8 788.2,228.8 790.8,230.9 794.2,232.2 795.9,229.9 798.6,232.6 801.2,230.6 804.1,230.1 807.6,233.6 809.7,231.7 812.6,233.3 815.1,231.6 817.7,229.8 819.4,230.3 822.5,231.0 826.0,231.9 828.2,232.4 830.3,232.3 833.8,231.7 835.5,229.9 837.2,230.7 838.8,230.4 841.9,230.8 845.0,229.8 847.3,230.9 850.1,230.5 851.6,228.6 854.4,232.0 856.8,230.9 859.3,231.8 861.6,231.4 863.9,231.4 865.9,232.5 867.5,229.7 869.8,229.7 871.8,228.0 874.7,230.8 877.9,230.4 878.0,230.3" fill="none" stroke="#a82028" stroke-width="1.1" stroke-linejoin="round"/><polyline points="337.0,219.4 338.8,218.3 341.7,218.7 344.5,219.0 346.9,219.4 348.9,220.7 352.0,216.6 355.1,218.0 357.6,217.8 360.1,218.5 362.1,219.1 363.6,218.5 365.8,217.6 368.5,217.9 370.1,217.3 373.2,217.9 375.2,217.0 377.2,216.7 378.7,214.6 382.2,217.0 385.2,214.1 388.5,214.4 391.2,214.8 392.8,215.1 394.9,214.8 397.4,209.5 399.1,210.2 402.5,208.9 404.8,209.0 406.6,207.9 409.7,209.5 411.5,207.4 414.8,208.2 417.2,210.9 419.8,209.9 422.0,208.6 424.5,206.9 426.4,210.6 427.9,209.5 431.2,207.3 433.2,207.9 436.2,209.3 438.1,209.5 441.6,207.6 444.9,210.7 447.9,207.9 450.9,207.6 453.6,210.3 456.5,207.2 458.3,209.6 460.7,207.4 463.9,209.2 465.8,207.8 469.1,208.3 472.4,210.8 474.7,208.7 476.9,208.6 479.3,209.4 481.6,207.9 485.1,207.4 487.4,208.4 488.9,207.9 490.6,207.5 493.5,210.9 497.0,206.9 499.5,210.3 502.0,210.9 504.6,209.9 507.6,206.9 509.6,209.0 512.3,207.0 514.9,209.5 517.6,209.9 519.5,207.9 521.3,206.9 523.5,209.3 526.9,207.3 529.1,208.2 531.8,208.9 533.9,210.8 535.6,208.5 537.2,207.5 540.3,210.4 543.4,210.6 545.6,209.3 548.5,207.2 551.4,207.8 554.7,208.8 558.1,209.4 560.4,208.0 563.9,210.6 567.3,210.8 570.0,211.1 573.2,211.0 575.7,207.2 578.0,209.7 580.0,207.5 583.2,211.1 585.0,210.4 586.7,210.5 589.8,208.0 592.8,207.4 595.3,210.8 598.5,209.9 600.1,209.9 602.1,209.3 604.2,210.8 606.5,208.7 608.4,208.4 610.0,208.8 612.2,208.6 615.5,210.0 618.9,211.2 621.9,207.6 624.4,207.6 626.4,209.6 629.8,210.3 632.4,208.2 635.3,208.6 636.9,207.6 638.8,207.6 642.0,209.4 645.1,210.1 648.3,209.7 651.0,207.4 653.4,207.0 656.1,210.4 659.3,208.5 661.4,207.8 663.9,209.1 666.0,209.7 669.0,209.5 670.5,208.0 673.4,212.4 676.8,211.1 678.4,210.9 681.1,213.1 683.8,214.3 687.1,215.2 689.7,213.6 691.7,216.3 694.0,215.7 697.5,214.7 700.8,218.4 702.5,218.7 704.2,219.7 705.9,219.2 707.5,217.6 709.9,220.8 711.6,221.6 714.9,220.5 717.7,222.6 719.4,223.1 722.0,220.9 724.2,223.7 726.7,224.0 728.6,223.7 730.4,220.6 732.3,222.6 734.6,224.3 737.5,225.1 740.1,226.4 741.7,226.4 744.6,225.0 747.8,228.3 750.9,226.4 754.0,227.7 755.5,224.6 757.9,227.9 759.5,225.9 762.6,227.3 764.4,227.4 767.3,228.5 769.3,226.6 772.2,225.9 774.4,227.6 775.9,226.9 778.2,228.9 780.3,230.5 783.6,229.0 785.7,228.4 788.2,228.4 790.8,230.5 794.2,231.8 795.9,229.5 798.6,232.2 801.2,230.2 804.1,229.7 807.6,233.2 809.7,231.3 812.6,232.9 815.1,231.2 817.7,229.4 819.4,229.9 822.5,230.6 826.0,231.5 828.2,232.0 830.3,231.9 833.8,231.3 835.5,229.5 837.2,230.3 838.8,230.0 841.9,230.4 845.0,229.4 847.3,230.5 850.1,230.1 851.6,228.2 854.4,231.6 856.8,230.5 859.3,231.4 861.6,231.0 863.9,231.0 865.9,232.1 867.5,229.3 869.8,229.3 871.8,227.6 874.7,230.4 877.9,230.0 878.0,229.9" fill="none" stroke="#383890" stroke-width="0.7" stroke-linejoin="round"/><polyline points="337.0,260.8 340.7,260.9 344.8,261.4 350.3,261.6 357.2,262.0 361.4,262.0 365.6,261.9 370.3,262.4 377.5,262.9 381.8,262.8 389.0,262.9 395.8,263.4 400.0,263.5 406.2,263.7 411.9,263.9 417.5,264.2 425.9,264.7 429.9,264.2 433.6,264.5 441.8,264.3 447.3,264.3 451.8,264.6 457.0,264.3 462.4,264.2 470.6,264.4 475.2,264.5 479.8,264.4 486.2,264.6 492.5,264.3 500.6,264.4 508.3,264.5 513.6,264.3 518.1,264.4 525.8,264.3 534.1,264.1 537.8,264.0 545.0,264.4 552.7,264.4 559.5,264.5 564.1,264.3 571.5,264.2 578.6,264.0 583.2,264.4 589.9,263.9 594.5,264.1 598.3,263.9 603.5,264.1 608.7,264.0 614.2,264.1 620.9,264.2 628.5,264.1 636.8,263.9 645.0,264.2 653.4,264.2 660.8,264.2 665.9,263.7 670.3,264.0 676.9,263.9 683.1,263.2 690.0,262.9 694.0,263.1 698.5,262.6 706.6,262.3 713.1,262.3 720.0,261.7 724.0,261.4 729.6,261.2 737.5,260.9 744.2,260.9 752.6,260.3 757.2,260.3 762.9,259.7 770.4,259.5 776.1,259.4 783.5,259.0 789.8,258.8 794.0,258.9 798.0,258.3 806.4,257.9 810.5,257.6 815.1,257.7 820.3,257.4 827.3,257.2 835.0,256.5 840.9,256.3 846.9,256.3 854.3,256.2 859.2,255.7 864.6,255.8 871.1,255.3 877.8,255.0 878.0,255.2" fill="none" stroke="#38e038" stroke-width="1.2" stroke-linejoin="round"/><polyline points="337.0,269.3 339.5,268.5 341.7,270.1 343.8,270.4 347.5,269.6 350.5,269.7 353.7,268.7 356.6,269.6 359.2,268.0 362.5,268.5 365.5,268.4 368.9,269.4 372.0,267.8 375.6,267.7 378.3,267.4 380.3,269.0 382.3,267.8 385.6,269.0 387.7,267.7 390.8,268.7 393.9,267.1 395.7,268.6 399.1,268.6 400.9,268.3 404.5,267.7 408.1,268.0 410.2,267.9 413.5,267.8 416.9,266.2 418.8,267.3 422.0,267.1 424.0,266.2 427.7,265.8 430.9,267.4 434.8,266.5 436.6,266.6 439.0,267.4 442.1,266.5 445.1,266.0 447.2,267.0 450.9,266.6 454.4,266.1 456.8,267.0 458.8,267.5 462.0,266.0 464.6,267.3 467.7,267.2 470.5,266.7 473.1,265.9 474.8,267.0 476.8,266.1 479.5,266.1 482.8,267.4 485.4,266.1 488.8,265.8 491.7,267.4 495.3,267.8 498.5,266.3 500.9,266.5 502.9,266.8 504.7,267.2 506.5,265.6 510.1,267.0 513.7,266.1 517.1,267.7 519.0,266.5 522.2,267.7 524.1,266.6 527.8,267.1 530.9,265.7 534.3,266.1 537.3,266.3 540.0,266.5 543.5,266.1 547.4,266.6 549.6,265.9 552.3,266.9 555.6,267.8 558.8,267.6 561.4,267.1 564.1,267.9 567.9,267.3 570.2,267.1 572.4,266.8 575.6,265.9 577.9,267.7 581.6,267.7 584.0,267.5 587.7,267.3 590.3,267.6 593.9,267.9 597.3,267.9 600.6,267.5 602.8,265.9 604.8,267.9 606.6,267.1 608.7,266.8 611.8,266.8 613.7,266.4 615.9,265.9 618.8,267.2 620.8,267.2 623.3,266.1 625.5,267.9 628.6,267.9 630.6,267.8 634.5,267.1 637.5,266.7 640.8,267.0 643.7,266.8 646.5,268.2 650.4,268.3 654.1,268.3 657.6,267.6 659.3,267.7 662.3,268.2 666.1,267.4 669.2,267.3 672.1,269.2 675.2,267.8 677.3,267.9 680.6,268.5 684.0,267.8 685.8,268.8 688.7,268.2 691.7,269.8 694.2,268.3 697.4,270.0 701.1,269.0 704.8,270.2 707.2,270.3 709.2,270.7 712.8,269.0 715.8,270.8 719.4,269.0 723.0,269.6 725.3,268.8 728.3,270.0 730.7,269.1 734.1,270.2 737.4,271.1 739.6,270.8 742.4,270.5 745.4,269.4 747.6,271.4 749.7,270.0 752.4,271.4 754.3,269.6 757.1,270.0 760.8,271.5 764.4,271.2 766.2,270.0 769.7,270.6 773.0,270.9 776.3,270.4 778.0,270.3 781.4,270.1 783.5,271.1 787.0,271.0 789.4,270.9 791.9,271.3 793.9,271.0 797.6,271.2 799.7,272.1 803.4,270.7 806.2,270.6 808.2,271.4 811.4,271.1 814.2,271.5 816.0,272.4 819.5,272.6 821.8,272.3 823.5,272.6 826.9,271.1 830.2,271.4 832.8,270.9 834.9,271.3 837.7,271.2 840.7,271.2 844.0,271.4 846.7,272.8 849.7,271.9 853.0,272.7 855.1,271.9 857.2,272.4 859.9,272.3 863.3,272.1 866.8,272.9 870.4,272.2 873.0,272.0 876.3,271.4 878.0,271.1" fill="none" stroke="#3a3ae8" stroke-width="1.0" stroke-linejoin="round"/><polyline points="337.0,373.7 339.4,375.0 342.4,371.1 344.6,373.6 348.3,374.9 350.7,375.3 353.8,376.3 357.9,380.2 360.6,382.6 364.7,386.1 368.3,386.5 371.4,386.0 374.7,388.3 377.9,389.7 380.6,389.1 384.8,388.7 387.5,390.7 391.7,399.7 395.6,401.1 397.4,404.4 399.8,405.4 402.8,409.3 406.5,411.4 408.8,412.4 412.0,409.3 414.7,409.7 418.4,410.0 422.4,410.0 426.1,415.5 428.3,415.5 432.0,418.0 434.8,416.4 438.6,415.7 441.5,417.1 445.5,417.9 449.7,416.4 453.5,415.9 457.2,416.1 461.0,416.9 464.2,417.8 466.5,415.7 470.6,417.8 473.5,417.5 475.4,417.2 478.2,416.6 481.0,415.6 483.3,417.0 487.4,416.7 489.5,417.5 493.4,415.7 496.6,416.0 498.8,415.6 501.4,417.0 504.3,415.7 506.4,417.1 510.0,416.8 513.4,416.5 517.6,416.1 521.4,418.3 525.0,416.9 529.2,415.8 533.3,417.2 536.6,417.8 539.7,417.0 542.8,418.2 546.5,418.0 550.5,417.5 554.3,415.6 558.1,416.7 560.0,417.0 562.8,416.0 564.8,417.0 568.0,417.5 571.2,417.8 574.4,417.8 578.2,417.7 580.6,416.4 584.1,417.3 587.3,417.0 589.6,417.8 593.8,415.9 595.7,416.0 598.6,417.7 601.7,417.7 604.9,416.2 609.1,417.8 612.2,417.8 616.2,417.4 618.7,416.9 621.6,415.7 623.8,416.2 627.1,417.8 629.9,418.3 633.6,416.0 635.7,415.6 638.6,416.5 642.7,418.3 644.5,416.1 647.9,418.3 651.3,417.9 654.9,418.0 658.0,418.5 661.0,417.5 665.1,416.1 667.6,416.8 671.1,409.8 674.5,403.8 678.0,396.3 681.0,393.4 682.8,390.7 686.5,390.2 688.9,389.5 692.6,386.1 696.8,383.1 700.5,379.9 703.2,375.0 707.1,372.6 709.8,368.7 712.4,367.8 715.5,365.6 718.9,365.2 722.4,363.8 725.5,362.3 728.3,359.2 731.9,357.8 734.4,356.0 737.7,355.6 739.5,352.7 741.6,352.2 745.5,347.4 747.8,345.3 750.6,344.8 752.5,344.0 756.2,340.2 758.8,340.9 760.7,340.1 763.1,340.0 767.2,339.2 770.8,331.3 772.6,329.8 776.7,324.3 778.6,319.6 781.6,315.1 784.7,317.1 788.4,317.2 790.5,316.0 794.3,313.9 796.7,311.5 800.3,310.5 804.3,309.9 807.6,308.6 809.4,306.1 812.8,303.7 815.6,302.2 819.2,295.2 822.8,291.1 824.9,291.4 828.1,290.1 831.4,291.7 835.4,291.7 838.7,288.7 842.0,288.3 845.6,287.7 847.8,288.4 851.7,287.1 854.9,287.7 858.2,287.8 860.4,285.8 863.4,284.5 866.2,283.7 868.5,285.3 872.6,284.0 876.4,286.2 878.0,287.5" fill="none" stroke="#8a8a2a" stroke-width="1.1" stroke-linejoin="round"/><polyline points="337.0,420.0 341.0,419.6 345.2,420.1 350.2,419.0 353.6,419.7 357.0,419.2 361.6,419.4 365.6,419.1 369.1,418.7 372.8,418.5 376.3,419.2 379.2,418.6 383.6,418.2 388.9,418.5 393.5,418.6 397.9,417.5 401.4,417.9 405.2,417.4 408.1,418.2 412.8,417.1 416.1,418.1 419.5,417.7 425.0,417.5 428.5,417.6 434.0,417.2 438.4,417.5 443.3,417.1 447.7,417.3 450.6,417.7 455.3,417.7 458.5,417.3 462.2,417.7 465.1,418.0 467.7,418.0 471.2,416.9 473.7,417.6 477.3,417.2 482.4,418.1 488.0,417.8 491.8,417.6 494.5,417.8 498.0,417.7 500.6,417.3 503.7,418.3 508.1,417.1 512.5,417.0 515.0,417.4 519.0,417.2 522.7,417.5 526.4,417.9 529.2,417.6 532.9,418.4 535.6,417.5 540.2,418.4 544.7,418.4 549.1,417.8 552.8,418.2 558.2,417.2 561.8,418.4 564.9,417.7 568.5,417.6 573.8,418.4 576.7,417.7 581.5,417.3 586.9,417.2 592.1,418.3 596.0,417.4 599.8,418.1 605.0,417.3 609.7,418.4 614.6,418.6 617.6,417.7 622.0,418.4 626.7,418.5 629.9,417.6 633.0,417.9 638.0,418.7 642.3,418.6 646.0,418.1 649.9,418.1 653.2,417.4 656.3,418.7 659.1,418.9 662.8,418.5 665.6,418.1 670.9,418.1 676.4,419.0 680.7,419.2 683.4,419.1 687.7,419.6 690.6,418.6 694.2,418.6 697.0,418.9 701.0,419.3 703.6,418.9 706.9,419.3 710.0,419.3 713.9,420.2 719.3,420.0 723.6,419.6 728.5,420.1 733.2,419.7 737.3,421.0 739.9,419.8 742.5,420.0 745.3,420.6 749.4,421.1 752.9,420.9 758.2,420.2 761.3,421.0 764.1,421.2 768.5,421.6 772.9,421.3 775.5,420.8 779.0,421.7 782.8,421.6 787.8,422.0 792.7,421.1 797.9,422.2 802.0,421.8 807.4,421.5 811.3,421.7 814.6,421.6 817.5,422.7 822.6,421.8 827.0,422.6 831.4,422.1 836.9,422.0 841.4,422.1 844.8,422.7 849.4,421.5 854.7,421.8 857.7,421.7 863.1,421.8 866.9,421.9 869.6,422.2 873.7,421.8 878.0,422.0" fill="none" stroke="#e030e0" stroke-width="1.3" stroke-linejoin="round"/><polyline points="337.0,432.7 341.3,432.3 346.8,432.5 349.8,432.5 356.7,432.6 363.0,432.4 370.0,432.3 374.1,432.6 377.9,432.6 381.1,432.5 384.9,432.7 388.0,432.4 393.7,432.5 398.2,432.5 404.5,432.3 410.5,432.7 414.9,432.3 418.6,432.3 423.0,432.7 426.1,432.5 431.7,432.3 435.4,432.7 439.0,432.3 445.6,432.5 450.3,432.3 457.1,432.3 464.0,432.5 469.7,432.6 473.7,432.3 477.3,432.6 481.3,432.6 487.2,432.6 492.3,432.7 496.5,432.5 499.5,432.3 503.9,432.3 508.5,432.7 511.8,432.3 515.8,432.4 520.0,432.6 524.6,432.6 529.6,432.6 534.9,432.5 541.3,432.4 545.4,432.7 548.8,432.3 553.0,432.4 556.9,432.7 562.2,432.3 567.1,432.7 571.4,432.6 574.8,432.6 580.8,432.6 586.3,432.5 591.8,432.7 597.6,432.3 604.0,432.4 607.1,432.6 610.9,432.6 615.8,432.6 621.6,432.6 626.6,432.4 631.6,432.6 635.8,432.5 639.8,432.7 646.3,432.4 653.2,432.4 658.2,432.4 663.1,432.4 666.6,432.6 672.0,432.5 675.9,432.3 681.4,432.7 685.5,432.5 690.4,432.7 696.8,432.6 701.1,432.4 706.2,432.4 710.5,432.5 715.4,432.7 721.9,432.7 726.9,432.7 733.7,432.5 738.4,432.5 743.2,432.4 748.7,432.5 753.8,432.5 759.4,432.6 763.6,432.7 766.7,432.7 771.3,432.4 774.6,432.6 778.6,432.3 784.0,432.4 789.7,432.6 796.4,432.3 802.1,432.7 807.3,432.5 811.7,432.4 816.6,432.5 820.8,432.6 824.2,432.3 829.3,432.7 834.8,432.6 839.1,432.5 845.0,432.3 850.1,432.6 854.4,432.4 860.8,432.3 863.9,432.7 867.9,432.4 872.2,432.6 877.9,432.5 878.0,432.5" fill="none" stroke="#30e0e0" stroke-width="1.3" stroke-linejoin="round"/><polyline points="337.0,100.6 372.4,100.6 436.3,100.6 496.8,100.6 537.0,100.6 586.8,100.6 634.8,100.6 690.9,100.6 752.4,100.6 786.2,100.6 817.3,100.6 878.0,100.6" fill="none" stroke="#a8d8d8" stroke-width="1" stroke-linejoin="round"/><polyline points="337.0,99.2 372.4,99.2 436.3,99.2 496.8,99.2 537.0,99.2 586.8,99.2 634.8,99.2 690.9,99.2 752.4,99.2 786.2,99.2 817.3,99.2 878.0,99.2" fill="none" stroke="#e83838" stroke-width="1.5" stroke-linejoin="round"/><polyline points="337.0,97.9 341.3,97.8 347.2,97.8 353.3,97.7 361.5,97.7 369.0,97.9 376.4,97.7 383.3,97.9 387.6,97.9 395.6,97.8 401.3,97.8 407.7,97.7 411.8,97.7 416.8,97.9 424.5,97.7 428.7,97.7 432.7,97.9 437.8,97.8 443.1,97.8 449.1,97.8 455.0,97.9 459.5,97.9 463.1,97.9 468.4,97.7 473.5,97.8 479.6,97.9 485.9,97.9 493.0,97.8 498.7,97.7 504.1,97.8 510.8,97.9 518.8,97.7 525.6,97.7 529.3,97.7 534.3,97.7 542.6,97.9 550.8,97.7 555.8,97.7 560.4,97.9 564.1,97.9 568.3,97.9 572.2,97.9 580.5,97.9 588.7,97.9 593.9,97.9 597.6,97.8 605.6,97.9 612.2,97.7 620.1,97.7 625.2,97.9 632.9,97.8 640.4,97.8 647.2,97.9 654.0,97.8 661.0,97.7 666.8,97.9 674.9,97.7 679.0,97.9 684.6,97.8 690.0,97.8 695.9,97.9 703.5,97.8 707.5,97.9 713.1,97.7 718.8,97.9 724.2,97.7 730.8,97.9 737.7,97.8 744.3,97.9 750.3,97.9 755.7,97.7 764.0,97.8 771.6,97.9 778.3,97.8 782.3,98.0 787.8,97.2 794.7,93.8 799.2,93.7 804.9,93.7 810.6,93.6 814.9,93.4 822.5,93.3 830.4,93.2 835.3,93.0 839.7,92.3 844.5,92.4 851.5,92.4 856.2,92.3 863.4,92.4 871.3,92.4 875.4,92.4 878.0,92.4" fill="none" stroke="#ff2a10" stroke-width="1.2" stroke-linejoin="round"/><polyline points="337.0,97.9 344.1,97.9 352.1,98.0 355.9,97.8 359.5,97.9 367.9,98.0 373.0,98.0 377.5,97.9 383.5,97.8 389.8,98.0 395.0,97.8" fill="none" stroke="#4040e0" stroke-width="1.4" stroke-linejoin="round"/><polyline points="395.0,98.0 399.6,98.0 406.1,97.9 410.2,98.0 418.2,97.9 422.7,98.0 425.0,97.8" fill="none" stroke="#8020a0" stroke-width="1.4" stroke-linejoin="round"/><polyline points="650.0,98.0 657.4,98.0 661.1,97.8 668.8,98.0 673.9,97.8 677.6,98.0 681.5,97.9 687.5,97.9 690.0,98.0" fill="none" stroke="#8020a0" stroke-width="1.4" stroke-linejoin="round"/><polyline points="735.0,97.8 739.3,98.0 743.8,98.0 751.4,97.9 757.6,98.0 762.6,97.8 767.8,98.0 774.0,97.8 779.2,97.8 786.2,98.5 790.4,95.5 792.0,94.4" fill="none" stroke="#4040e0" stroke-width="1.4" stroke-linejoin="round"/><polyline points="337.0,96.5 343.0,96.5 350.7,96.6 354.7,96.4 360.1,96.4 364.0,96.5 370.7,96.4 375.2,96.6 380.3,96.5 387.8,96.4 391.7,96.5 396.0,96.6 401.1,96.5 408.6,96.6 414.4,96.6 421.0,96.5 429.0,96.6 433.7,96.6 439.4,96.4 443.8,96.4 451.2,96.4 454.9,96.6 462.1,96.6 467.4,96.5 473.7,96.6 478.2,96.5 486.3,96.4 491.4,96.5 497.2,96.6 505.3,96.5 511.8,96.6 516.9,96.5 521.6,96.6 529.6,96.6 536.6,96.5 543.2,96.6 549.5,96.6 557.5,96.6 561.7,96.6 567.1,96.6 574.6,96.5 581.4,96.4 587.9,96.6 594.7,96.5 600.6,96.6 606.8,96.4 612.5,96.4 620.7,96.6 625.6,96.5 630.4,96.4 635.5,96.5 639.9,96.4 646.4,96.5 652.8,96.5 656.7,96.6 661.5,96.6 669.4,96.6 674.3,96.4 681.1,96.4 686.7,96.6 691.0,96.5 699.3,96.6 705.9,96.4 710.7,96.4 717.1,96.4 722.1,96.5 729.5,96.5 733.3,96.6 738.9,96.6 745.6,96.5 752.7,96.6 756.8,96.6 760.6,96.6 766.4,96.4 772.9,96.4 778.7,96.4 782.6,97.0 787.5,96.3 794.4,92.4 800.5,92.5 808.7,92.2 812.5,92.3 819.1,92.0 825.5,92.1 831.2,92.1 835.1,91.6 840.6,91.0 845.7,91.1 850.1,91.1 857.7,91.1 861.7,91.0 865.5,91.1 873.4,91.1 878.0,91.0" fill="none" stroke="#f0f030" stroke-width="1.0" stroke-linejoin="round"/><polyline points="337.0,89.9 339.0,88.2 341.2,87.8 344.7,86.8 346.8,89.2 350.9,89.5 354.7,91.0 358.3,93.3 361.2,94.3 365.0,93.2 367.4,93.8 370.7,98.0 373.4,98.7 376.3,98.7 380.4,101.6 382.8,102.2 386.4,101.0 390.0,104.8 392.0,107.9 396.2,111.8 399.1,112.0 402.2,110.9 404.7,113.5 407.8,112.5 412.0,114.8 414.6,114.8 418.2,114.8 421.8,111.9 425.7,115.5 429.2,112.7 432.0,112.6 434.6,114.2 437.3,115.0 440.0,113.4 444.0,116.7 447.8,113.0 450.1,116.4 452.5,116.0 454.4,116.3 458.5,114.9 460.4,116.9 463.1,114.3 465.4,115.1 467.6,116.6 471.7,116.8 474.6,113.3 477.9,115.7 481.7,117.0 484.7,114.5 488.5,113.8 492.1,115.8 495.4,116.9 498.5,114.2 502.5,116.7 505.9,114.0 508.5,117.7 512.5,113.8 516.2,114.0 520.3,117.1 523.7,115.2 526.6,113.8 529.2,114.7 532.5,117.4 534.8,117.3 538.3,115.0 541.8,113.8 545.7,116.7 548.1,114.2 551.2,116.9 554.4,116.0 557.6,117.7 560.4,114.1 562.2,117.7 566.2,114.1 570.2,116.5 572.4,115.4 576.4,116.2 579.6,114.9 581.4,118.0 584.8,116.1 587.3,116.7 590.0,115.9 592.0,117.2 595.8,117.6 599.2,114.2 601.5,118.0 604.7,115.0 607.5,116.5 611.7,114.6 614.0,115.3 617.4,117.7 621.1,117.7 625.1,117.8 627.5,116.6 631.4,115.8 633.6,115.8 635.8,115.4 639.1,116.8 643.0,115.6 645.8,114.4 648.0,116.7 650.1,115.4 652.9,116.5 656.7,116.7 660.1,117.3 663.0,113.1 666.1,114.5 668.4,115.4 670.7,109.6 673.2,109.8 676.7,105.7 680.1,104.9 682.0,104.3 685.2,101.2 689.3,97.8 691.3,97.5 693.4,95.5 697.6,97.0 700.6,94.4 704.6,92.9 708.4,92.9 711.3,88.9 715.5,86.9 717.9,87.8 720.5,85.3 722.8,85.2 726.4,81.8 728.5,81.9 731.3,79.9 735.0,80.8 738.5,77.5 741.0,76.8 743.2,75.7 747.0,77.9 750.8,74.6 754.2,75.9 757.4,73.1 759.4,70.8 762.1,72.1 764.5,71.7 767.5,68.2 770.0,68.9 773.3,65.7 776.2,63.1 778.0,63.4" fill="none" stroke="#a030a0" stroke-width="1.1" stroke-linejoin="round"/><rect x="560" y="55" width="9" height="8" fill="#d4d4d4"/><path d="M560.5,55 V62.5 M568.5,55 V62.5" stroke="#303030"/><path d="M564.5,57 V61 M563,58 L564.5,57" stroke="#404040" stroke-width="0.8"/></svg><div style="position:absolute;left:240px;top:56.5px;width:87px;text-align:right;font-family:'Liberation Mono';font-size:13px;letter-spacing:-1.6px;line-height:16px;color:#202020">1.20</div><div style="position:absolute;left:240px;top:97.5px;width:87px;text-align:right;font-family:'Liberation Mono';font-size:13px;letter-spacing:-1.6px;line-height:16px;color:#202020">0.98</div><div style="position:absolute;left:240px;top:138.5px;width:87px;text-align:right;font-family:'Liberation Mono';font-size:13px;letter-spacing:-1.6px;line-height:16px;color:#202020">0.76</div><div style="position:absolute;left:240px;top:179.5px;width:87px;text-align:right;font-family:'Liberation Mono';font-size:13px;letter-spacing:-1.6px;line-height:16px;color:#202020">0.54</div><div style="position:absolute;left:240px;top:220.5px;width:87px;text-align:right;font-family:'Liberation Mono';font-size:13px;letter-spacing:-1.6px;line-height:16px;color:#202020">0.32</div><div style="position:absolute;left:240px;top:261.5px;width:87px;text-align:right;font-family:'Liberation Mono';font-size:13px;letter-spacing:-1.6px;line-height:16px;color:#202020">0.10</div><div style="position:absolute;left:240px;top:302.5px;width:87px;text-align:right;font-family:'Liberation Mono';font-size:13px;letter-spacing:-1.6px;line-height:16px;color:#202020">-0.12</div><div style="position:absolute;left:240px;top:343.5px;width:87px;text-align:right;font-family:'Liberation Mono';font-size:13px;letter-spacing:-1.6px;line-height:16px;color:#202020">-0.34</div><div style="position:absolute;left:240px;top:384.5px;width:87px;text-align:right;font-family:'Liberation Mono';font-size:13px;letter-spacing:-1.6px;line-height:16px;color:#202020">-0.56</div><div style="position:absolute;left:240px;top:425.5px;width:87px;text-align:right;font-family:'Liberation Mono';font-size:13px;letter-spacing:-1.6px;line-height:16px;color:#202020">-0.78</div><div style="position:absolute;left:240px;top:466.5px;width:87px;text-align:right;font-family:'Liberation Mono';font-size:13px;letter-spacing:-1.6px;line-height:16px;color:#202020">-1.00</div><div style="position:absolute;left:307.0px;top:482px;width:60px;text-align:center;font-family:'Liberation Mono';font-size:13px;letter-spacing:-1.6px;line-height:14px;color:#202020">-94</div><div style="position:absolute;left:397.5px;top:482px;width:60px;text-align:center;font-family:'Liberation Mono';font-size:13px;letter-spacing:-1.6px;line-height:14px;color:#202020">-93</div><div style="position:absolute;left:488.0px;top:482px;width:60px;text-align:center;font-family:'Liberation Mono';font-size:13px;letter-spacing:-1.6px;line-height:14px;color:#202020">-92</div><div style="position:absolute;left:578.5px;top:482px;width:60px;text-align:center;font-family:'Liberation Mono';font-size:13px;letter-spacing:-1.6px;line-height:14px;color:#202020">-91</div><div style="position:absolute;left:669.0px;top:482px;width:60px;text-align:center;font-family:'Liberation Mono';font-size:13px;letter-spacing:-1.6px;line-height:14px;color:#202020">-90</div><div style="position:absolute;left:759.5px;top:482px;width:60px;text-align:center;font-family:'Liberation Mono';font-size:13px;letter-spacing:-1.6px;line-height:14px;color:#202020">-89</div><div style="position:absolute;left:870px;top:482px;font-family:'Liberation Mono';font-size:13px;letter-spacing:-1.6px;line-height:11px;color:#202020;padding-top:1px">08.09.20<br>14:52:45</div><div style="position:absolute;left:595px;top:489px;font-size:15px;line-height:16px;color:#202020;-webkit-text-stroke:0.4px">分钟</div></body></html>
